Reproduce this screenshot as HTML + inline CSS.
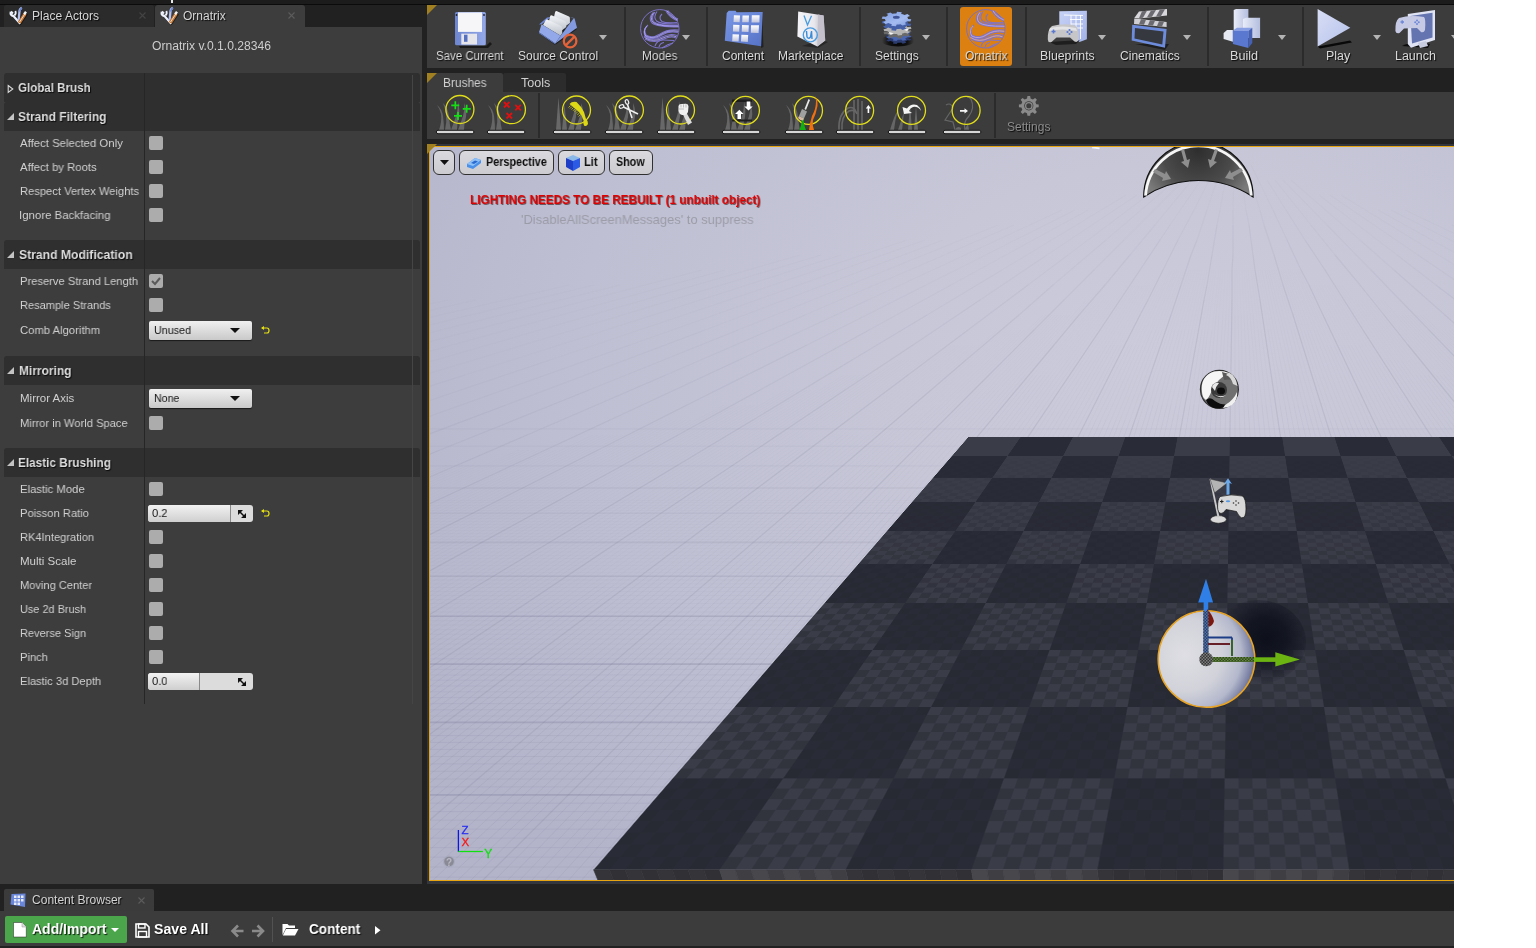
<!DOCTYPE html>
<html><head><meta charset="utf-8">
<style>
*{box-sizing:border-box}
html,body{margin:0;padding:0}
body{width:1536px;height:948px;background:#fff;position:relative;overflow:hidden;font-family:"Liberation Sans",sans-serif}
.a{position:absolute}
svg{position:absolute;overflow:visible}
#app{left:0;top:0;width:1454px;height:948px;background:#212121;overflow:hidden}
.tx{position:absolute;white-space:nowrap;transform-origin:0 0;line-height:1;will-change:transform;font-family:"Liberation Sans",sans-serif}
.hdr{position:absolute;left:4px;width:416px;background:#2f2f2f;border-radius:3px 3px 0 0}
.cb{position:absolute;left:149px;width:14px;height:14px;background:#acacac;border-radius:2px}
.dd{position:absolute;width:0;height:0;border-left:4px solid transparent;border-right:4px solid transparent;border-top:5px solid #b4b4b4}
.sep{position:absolute;width:2px;background:#2b2b2b}
.vbtn{position:absolute;top:150px;height:25px;border:1px solid #303030;border-radius:6px;background:linear-gradient(#dadade,#cbcbd0)}
.combo{position:absolute;left:149px;width:103px;height:19px;border-radius:2px;background:linear-gradient(#f0f0f0,#c9c9c9);box-shadow:0 1px 1px #1a1a1a}
.combo i{position:absolute;right:12px;top:7px;width:0;height:0;border-left:5px solid transparent;border-right:5px solid transparent;border-top:5px solid #111}
.spin{position:absolute;left:148px;width:105px;height:17px;border-radius:3px;background:#dcdcdc;overflow:hidden}
.spin b{position:absolute;left:0;top:0;height:17px;background:linear-gradient(#f2f2f2,#cfcfcf);border-right:1px solid #8a8a8a}
.reset{position:absolute;left:261px;width:9px;height:8px}
.bi{position:absolute;top:92px;width:50px;height:47px}
</style></head>
<body>
<div id="app" class="a">
  <!-- top strip -->
  <div class="a" style="left:0;top:0;width:1454px;height:4px;background:#1c1c1c"></div>
  <div class="a" style="left:0;top:4px;width:1454px;height:1px;background:#0b0b0b"></div>
  <div class="a" style="left:171px;top:0;width:1.5px;height:2.5px;background:#e8e8e8"></div>

  <!-- LEFT PANEL tabs -->
  <div class="a" style="left:4px;top:5px;width:150px;height:22px;background:#2b2b2b;border-radius:2px 2px 0 0"></div>
  <div class="a" style="left:155px;top:5px;width:150px;height:22px;background:#3d3d3d;border-radius:3px 3px 0 0"></div>
  <svg style="left:139px;top:12px" width="7" height="7"><path d="M0.5 0.5 L6.5 6.5 M6.5 0.5 L0.5 6.5" stroke="#444" stroke-width="1.1"/></svg>
  <svg style="left:288px;top:12px" width="7" height="7"><path d="M0.5 0.5 L6.5 6.5 M6.5 0.5 L0.5 6.5" stroke="#5c5c5c" stroke-width="1.1"/></svg>
  <!-- tab icons -->
  <svg style="left:9px;top:7px" width="18" height="18" viewBox="0 0 18 18">
    <path d="M5 9 L12 17.5 M11 16 L17.5 6.5" stroke="#000" stroke-width="3.5" opacity=".5"/>
    <path d="M1.8 4.8 Q1 8.5 4.5 9 L11.3 16.8" fill="none" stroke="#eef2fc" stroke-width="2.3"/>
    <path d="M2 4.5 L4 6.5 M6.3 4 Q7.5 6.5 5.5 8.5" fill="none" stroke="#eef2fc" stroke-width="1.8"/>
    <path d="M12.8 0.8 Q10.5 2 10.4 5 L9.6 13.5" fill="none" stroke="#b4c2f0" stroke-width="2.3"/>
    <path d="M12.8 0.8 Q11 2 10.8 4.5" fill="none" stroke="#6a84d4" stroke-width="1.6"/>
    <path d="M10.2 15.8 L16.2 6.6" stroke="#c47838" stroke-width="3.3"/>
    <path d="M10.5 15 L15.8 7" stroke="#f0d8c0" stroke-width="1"/>
    <path d="M15.2 7.2 L17 4.8" stroke="#f4f4f4" stroke-width="2.4"/>
  </svg>
  <svg style="left:160px;top:7px" width="18" height="18" viewBox="0 0 18 18">
    <path d="M5 9 L12 17.5 M11 16 L17.5 6.5" stroke="#000" stroke-width="3.5" opacity=".5"/>
    <path d="M1.8 4.8 Q1 8.5 4.5 9 L11.3 16.8" fill="none" stroke="#eef2fc" stroke-width="2.3"/>
    <path d="M2 4.5 L4 6.5 M6.3 4 Q7.5 6.5 5.5 8.5" fill="none" stroke="#eef2fc" stroke-width="1.8"/>
    <path d="M12.8 0.8 Q10.5 2 10.4 5 L9.6 13.5" fill="none" stroke="#b4c2f0" stroke-width="2.3"/>
    <path d="M12.8 0.8 Q11 2 10.8 4.5" fill="none" stroke="#6a84d4" stroke-width="1.6"/>
    <path d="M10.2 15.8 L16.2 6.6" stroke="#c47838" stroke-width="3.3"/>
    <path d="M10.5 15 L15.8 7" stroke="#f0d8c0" stroke-width="1"/>
    <path d="M15.2 7.2 L17 4.8" stroke="#f4f4f4" stroke-width="2.4"/>
  </svg>

  <div id="lp" class="a" style="left:0;top:27px;width:422px;height:857px;background:#3d3d3d"></div>

  <!-- headers -->
  <div class="hdr" style="top:73px;height:29px;border-radius:3px 3px 0 0"></div>
  <div class="hdr" style="top:102px;height:29px"></div>
  <div class="hdr" style="top:240px;height:29px"></div>
  <div class="hdr" style="top:356px;height:29px"></div>
  <div class="hdr" style="top:448px;height:29px"></div>
  <!-- triangles -->
  <svg style="left:7px;top:84px" width="8" height="10"><path d="M1.2 1.5 L5.8 5 L1.2 8.5 Z" fill="none" stroke="#d8d8d8" stroke-width="1.1"/></svg>
  <svg style="left:7px;top:113px" width="8" height="8"><path d="M7 0 L7 7 L0 7 Z" fill="#c4c4c4"/></svg>
  <svg style="left:7px;top:251px" width="8" height="8"><path d="M7 0 L7 7 L0 7 Z" fill="#c4c4c4"/></svg>
  <svg style="left:7px;top:367px" width="8" height="8"><path d="M7 0 L7 7 L0 7 Z" fill="#c4c4c4"/></svg>
  <svg style="left:7px;top:459px" width="8" height="8"><path d="M7 0 L7 7 L0 7 Z" fill="#c4c4c4"/></svg>

  <div class="a" style="left:144px;top:73px;width:1px;height:631px;background:#262626"></div>
  <div class="a" style="left:412px;top:75px;width:1px;height:629px;background:#454545"></div>

  <!-- checkboxes -->
  <div class="cb" style="top:136px"></div>
  <div class="cb" style="top:160px"></div>
  <div class="cb" style="top:184px"></div>
  <div class="cb" style="top:208px"></div>
  <div class="cb" style="top:274px"><svg style="left:2px;top:2px" width="10" height="10"><path d="M1 5 L4 8 L9 2" fill="none" stroke="#5a5a5a" stroke-width="2"/></svg></div>
  <div class="cb" style="top:298px"></div>
  <div class="cb" style="top:416px"></div>
  <div class="cb" style="top:482px"></div>
  <div class="cb" style="top:530px"></div>
  <div class="cb" style="top:554px"></div>
  <div class="cb" style="top:578px"></div>
  <div class="cb" style="top:602px"></div>
  <div class="cb" style="top:626px"></div>
  <div class="cb" style="top:650px"></div>

  <!-- combos -->
  <div class="combo" style="top:321px"><i></i></div>
  <div class="combo" style="top:389px"><i></i></div>
  <svg class="reset" style="top:326px" width="9" height="9"><path d="M1 2 L6 2 Q8 2 8 4.5 Q8 7 6 7 L3 7" fill="none" stroke="#e6e010" stroke-width="1.2"/><path d="M0 2 L3 0 L3 4 Z" fill="#e6e010"/></svg>
  <!-- spins -->
  <div class="spin" style="top:505px"><b style="width:83px"></b><svg style="left:89px;top:4px" width="10" height="10"><path d="M1 1 L6 1 L1 6 Z M9 9 L4 9 L9 4 Z" fill="#111"/><path d="M2 2 L8 8" stroke="#111" stroke-width="1.5"/></svg></div>
  <div class="spin" style="top:673px"><b style="width:52px"></b><svg style="left:89px;top:4px" width="10" height="10"><path d="M1 1 L6 1 L1 6 Z M9 9 L4 9 L9 4 Z" fill="#111"/><path d="M2 2 L8 8" stroke="#111" stroke-width="1.5"/></svg></div>
  <svg class="reset" style="top:509px" width="9" height="9"><path d="M1 2 L6 2 Q8 2 8 4.5 Q8 7 6 7 L3 7" fill="none" stroke="#e6e010" stroke-width="1.2"/><path d="M0 2 L3 0 L3 4 Z" fill="#e6e010"/></svg>

  <!-- TOOLBAR -->
  <div class="a" style="left:427px;top:5px;width:1027px;height:63px;background:#3c3c3c"></div>
  <svg style="left:427px;top:5px" width="12" height="12"><path d="M0 0 L10 0 L0 10 Z" fill="#a08020"/></svg>
  <div class="sep" style="left:624px;top:7px;height:59px"></div>
  <div class="sep" style="left:706px;top:7px;height:59px"></div>
  <div class="sep" style="left:859px;top:7px;height:59px"></div>
  <div class="sep" style="left:946px;top:7px;height:59px"></div>
  <div class="sep" style="left:1025px;top:7px;height:59px"></div>
  <div class="sep" style="left:1207px;top:7px;height:59px"></div>
  <div class="sep" style="left:1302px;top:7px;height:59px"></div>
  <div class="a" style="left:960px;top:7px;width:52px;height:59px;background:#db8011;border-radius:3px"></div>
  <div class="dd" style="left:599px;top:35px"></div>
  <div class="dd" style="left:682px;top:35px"></div>
  <div class="dd" style="left:922px;top:35px"></div>
  <div class="dd" style="left:1098px;top:35px"></div>
  <div class="dd" style="left:1183px;top:35px"></div>
  <div class="dd" style="left:1278px;top:35px"></div>
  <div class="dd" style="left:1373px;top:35px"></div>
  <div class="dd" style="left:1451px;top:35px"></div>
    <!-- floppy -->
  <svg style="left:450px;top:8px" width="45" height="42" viewBox="0 0 45 42">
    <defs><linearGradient id="flb" x1="0" y1="0" x2="1" y2="0"><stop offset="0" stop-color="#6d86d0"/><stop offset=".5" stop-color="#7f96dc"/><stop offset="1" stop-color="#94a8e8"/></linearGradient></defs>
    <path d="M9 38 L36 38 L40 34 L42 36 L38 40 L10 40 Z" fill="#0c0c0c" opacity=".7"/>
    <rect x="5" y="4" width="30.8" height="33.3" rx="1.5" fill="url(#flb)"/>
    <rect x="8" y="4.4" width="24" height="19.5" fill="#f6f6f8"/>
    <rect x="11.3" y="25.7" width="15.7" height="10.8" fill="#e6e6ea"/>
    <rect x="14" y="26.7" width="3.5" height="7.1" fill="#5670c0"/>
    <circle cx="6.5" cy="7" r="0.9" fill="#222"/><circle cx="34" cy="7" r="0.9" fill="#222"/>
  </svg>
  <!-- source control -->
  <svg style="left:530px;top:6px" width="60" height="44" viewBox="0 0 60 44">
    <defs><linearGradient id="ppg" x1="0" y1="0" x2="0" y2="1"><stop offset="0" stop-color="#f4f6f8"/><stop offset="1" stop-color="#b8bec8"/></linearGradient></defs>
    <path d="M9 27 L25 39 L47 23 L40 22 Z" fill="#000" opacity=".5"/>
    <path d="M9 18.6 L17 11.5 L21 11 L11.6 18.3 Z" fill="#7088d6"/>
    <path d="M30.6 29.7 L43.6 12.5 L44.5 12.3 L47 21.8 L25.3 37.6 Z" fill="#839ae0"/>
    <path d="M40 11 L44 12 L43.6 12.5 Z" fill="#7088d6"/>
    <path d="M25 6.5 Q25.5 4.8 27 5.2 L39 10.5 Q40 11 39.9 12.5 L39.9 17 L30 24 L24 11 Z" fill="url(#ppg)"/>
    <path d="M20 10.7 Q20.5 9 22 9.4 L35 15 Q36.2 15.6 36.2 17 L36.2 21 L30 26 L19 15 Z" fill="url(#ppg)"/>
    <path d="M15.3 15 Q15.8 13.2 17.3 13.6 L31 20 Q32 20.6 32 22 L32.3 27 L30.6 29.7 L13 19 Z" fill="url(#ppg)"/>
    <path d="M9 26.2 L11.6 18.3 L30.6 29.7 L25.3 37.6 Z" fill="#92a8e8"/>
    <path d="M9 26.2 L25.3 37.6 L25.5 38.6 L9 27.2 Z" fill="#6a82cc"/>
    <circle cx="40.1" cy="35" r="6.3" fill="none" stroke="#e2623a" stroke-width="2.3"/>
    <path d="M35.7 39.4 L44.5 30.6" stroke="#e2623a" stroke-width="2.3"/>
  </svg>
  <!-- modes -->
  <svg style="left:0;top:0" width="1" height="1"><defs>
    <symbol id="orx" viewBox="0 0 48 46" width="48" height="46" overflow="visible">
      <circle cx="23.8" cy="22.8" r="19.2" fill="none" stroke="#7a70c4" stroke-width="1"/>
      <g fill="none" stroke="#7e74cc" stroke-width="1.1">
        <path d="M17 6.5 Q12 12 16 17 Q21 21 42.5 21"/>
        <path d="M19 6 Q14.5 12 18 16 Q23 20 42.5 19.5"/>
        <path d="M21 5.5 Q17 11 20.5 15 Q25 18.5 42 18"/>
        <path d="M26 8 Q22 12 26 15.5 Q30 17.5 41 16.5"/>
        <path d="M30 5 Q33 11 41.5 15"/>
        <path d="M32 4.5 Q35 10 42 13"/>
        <path d="M12 19 Q7 23 10 29 Q16 33 24 28 Q31 23 42.5 24"/>
        <path d="M10 21 Q6 26 10 31 Q18 35 26 29 Q33 24.5 42 26.5"/>
        <path d="M8 30 Q16 36 26 31 Q34 27 41 29.5"/>
        <path d="M9 33 Q18 38 28 33 Q35 29.5 40 32"/>
        <path d="M19 40 Q21 34 27 34 Q33 34 38 34.5"/>
        <path d="M23 41 Q24 37 28 36.5"/>
        <path d="M26 42 Q32 38 37 37"/>
      </g>
      <g fill="none" stroke="#aea6f6" stroke-width=".9">
        <path d="M18 6.3 Q13.3 12 17 16.5 Q22 20.5 42.5 20.3"/>
        <path d="M11 20 Q6.5 24.5 9.7 30 Q17 34 25 28.5 Q32 23.7 42.3 25.3"/>
        <path d="M8.5 31.5 Q17 37 27 32 Q34.5 28.3 40.5 30.8"/>
        <path d="M31 4.7 Q34 10.5 41.8 14"/>
      </g>
    </symbol></defs></svg>
  <svg style="left:636px;top:6px" width="48" height="46" viewBox="0 0 48 46"><use href="#orx"/></svg>
  <!-- content -->
  <svg style="left:715px;top:6px" width="50" height="44" viewBox="0 0 50 44">
    <defs><linearGradient id="cfg" x1="0" y1="0" x2="1" y2="1"><stop offset="0" stop-color="#7a98e6"/><stop offset="1" stop-color="#5572c6"/></linearGradient>
    <linearGradient id="sqg" x1="0" y1="0" x2="0" y2="1"><stop offset="0" stop-color="#ffffff"/><stop offset="1" stop-color="#c0c4dc"/></linearGradient></defs>
    <path d="M47 8 L48.5 41 L46 42 Z" fill="#111" opacity=".6"/>
    <path d="M11.7 7 L13.7 4.7 L20.7 4.7 L21.5 6.2 L47.7 5.9 L46.1 40.2 L9.8 34.8 Z" fill="url(#cfg)"/>
    <g fill="url(#sqg)">
      <path d="M18.9 9.3 L25 9.5 L24.6 16.2 L18.5 16 Z"/><path d="M27.5 9.5 L34 9.6 L33.7 16.3 L27.2 16.2 Z"/><path d="M36.8 9.3 L44.6 9.2 L44.4 16.6 L36.5 16.5 Z"/>
      <path d="M18.2 18.8 L24.5 19 L24.2 25.8 L17.9 25.5 Z"/><path d="M27 19 L33.8 19.2 L33.5 26 L26.7 25.8 Z"/><path d="M36 19.3 L44 19.3 L43.6 27 L35.8 26.8 Z"/>
      <path d="M17.6 28.3 L24 28.6 L23.6 35.5 L17.2 35.2 Z"/><path d="M26.4 28.7 L33.2 29 L32.8 36 L26 35.6 Z"/>
    </g>
  </svg>
  <!-- marketplace -->
  <svg style="left:790px;top:6px" width="42" height="44" viewBox="0 0 42 44">
    <defs><linearGradient id="bgg" x1="0" y1="0" x2="1" y2="0"><stop offset="0" stop-color="#f4f4f8"/><stop offset=".6" stop-color="#e8e8ee"/><stop offset="1" stop-color="#b4b0bc"/></linearGradient></defs>
    <path d="M12 40 L28 42 L38 36 L30 34 Z" fill="#000" opacity=".35"/>
    <path d="M8.2 5.5 L33.6 9.4 L35.2 34.4 L27.3 40.6 L7.4 30.5 Z" fill="url(#bgg)"/>
    <path d="M28 8.5 L33.6 9.4 L35.2 34.4 L27.3 40.6 Z" fill="#c4c0cc"/>
    <path d="M14 9.5 L17.5 19 L21.5 9.8" fill="none" stroke="#4a9ce0" stroke-width="1.3"/>
    <circle cx="20.3" cy="28.9" r="7" fill="none" stroke="#4a9ce0" stroke-width="1.4"/>
    <path d="M16.5 25 L17 31 Q18.5 33.5 20.5 31 L21.5 25 M21.5 25 L22 33" fill="none" stroke="#3a8cd8" stroke-width="1.4"/>
  </svg>
  <!-- settings gears -->
  <svg style="left:876px;top:8px" width="44" height="42" viewBox="0 0 44 42">
    <defs><radialGradient id="gsh" cx="22" cy="33" r="16" gradientUnits="userSpaceOnUse"><stop offset="0" stop-color="#000" stop-opacity=".95"/><stop offset=".6" stop-color="#000" stop-opacity=".7"/><stop offset="1" stop-color="#000" stop-opacity="0"/></radialGradient>
    <linearGradient id="gtg" x1="0" y1="0" x2="1" y2="1"><stop offset="0" stop-color="#7e9ce0"/><stop offset=".6" stop-color="#a4bcf0"/><stop offset="1" stop-color="#7c98d8"/></linearGradient></defs>
    <ellipse cx="22" cy="32.5" rx="17" ry="6" fill="url(#gsh)"/>
    <path d="M32.6 29.6 L32.6 30.4 L35.4 30.9 L34.2 32.6 L31.3 32.3 L30.3 33.0 L29.1 33.6 L30.3 34.8 L26.7 35.7 L25.2 34.5 L23.4 34.7 L21.7 34.7 L20.6 35.9 L16.8 35.4 L17.5 34.1 L16.0 33.6 L14.8 33.0 L12.1 33.6 L10.2 31.9 L12.7 31.2 L12.4 30.4 L12.4 29.6 L9.6 29.1 L10.8 27.4 L13.7 27.7 L14.7 27.0 L15.9 26.4 L14.7 25.2 L18.3 24.3 L19.8 25.5 L21.6 25.3 L23.3 25.3 L24.4 24.1 L28.2 24.6 L27.5 25.9 L29.0 26.4 L30.2 27.0 L32.9 26.4 L34.8 28.1 L32.3 28.8 Z" fill="#2c3c70"/>
    <path d="M32.6 26.6 L32.6 27.4 L35.4 27.9 L34.2 29.6 L31.3 29.3 L30.3 30.0 L29.1 30.6 L30.3 31.8 L26.7 32.7 L25.2 31.5 L23.4 31.7 L21.7 31.7 L20.6 32.9 L16.8 32.4 L17.5 31.1 L16.0 30.6 L14.8 30.0 L12.1 30.6 L10.2 28.9 L12.7 28.2 L12.4 27.4 L12.4 26.6 L9.6 26.1 L10.8 24.4 L13.7 24.7 L14.7 24.0 L15.9 23.4 L14.7 22.2 L18.3 21.3 L19.8 22.5 L21.6 22.3 L23.3 22.3 L24.4 21.1 L28.2 21.6 L27.5 22.9 L29.0 23.4 L30.2 24.0 L32.9 23.4 L34.8 25.1 L32.3 25.8 Z" fill="#4a66b0"/>
    <path d="M32.2 25.0 L31.6 25.9 L34.1 26.8 L31.7 28.5 L29.0 27.7 L27.5 28.2 L25.8 28.7 L26.2 30.1 L21.9 30.5 L21.1 29.1 L19.3 29.0 L17.4 28.7 L15.5 29.9 L11.9 28.7 L13.5 27.5 L12.4 26.8 L11.5 26.0 L8.3 26.2 L7.5 24.2 L10.6 23.8 L10.8 23.0 L11.4 22.1 L8.9 21.2 L11.3 19.5 L14.0 20.3 L15.5 19.8 L17.2 19.3 L16.8 17.9 L21.1 17.5 L21.9 18.9 L23.7 19.0 L25.6 19.3 L27.5 18.1 L31.1 19.3 L29.5 20.5 L30.6 21.2 L31.5 22.0 L34.7 21.8 L35.5 23.8 L32.4 24.2 Z" fill="#6a6a6a"/>
    <path d="M32.2 22.0 L31.6 22.9 L34.1 23.8 L31.7 25.5 L29.0 24.7 L27.5 25.2 L25.8 25.7 L26.2 27.1 L21.9 27.5 L21.1 26.1 L19.3 26.0 L17.4 25.7 L15.5 26.9 L11.9 25.7 L13.5 24.5 L12.4 23.8 L11.5 23.0 L8.3 23.2 L7.5 21.2 L10.6 20.8 L10.8 20.0 L11.4 19.1 L8.9 18.2 L11.3 16.5 L14.0 17.3 L15.5 16.8 L17.2 16.3 L16.8 14.9 L21.1 14.5 L21.9 15.9 L23.7 16.0 L25.6 16.3 L27.5 15.1 L31.1 16.3 L29.5 17.5 L30.6 18.2 L31.5 19.0 L34.7 18.8 L35.5 20.8 L32.4 21.2 Z" fill="#b4b4b4"/>
    <path d="M13 24 L18 25.5 L14 26.5 Z M27 21.5 L33 20.5 L31 23 Z" fill="#f4f4f4"/>
    <path d="M31.8 14.4 L32.0 15.4 L35.3 15.8 L34.4 18.0 L31.0 17.8 L30.1 18.6 L28.8 19.4 L30.5 20.8 L26.6 22.0 L24.6 20.7 L22.7 21.0 L20.7 21.1 L19.9 22.7 L15.3 22.2 L15.8 20.6 L14.1 20.2 L12.5 19.5 L9.6 20.4 L7.0 18.5 L9.7 17.5 L9.2 16.6 L9.0 15.6 L5.7 15.2 L6.6 13.0 L10.0 13.2 L10.9 12.4 L12.2 11.6 L10.5 10.2 L14.4 9.0 L16.4 10.3 L18.3 10.0 L20.3 9.9 L21.1 8.3 L25.7 8.8 L25.2 10.4 L26.9 10.8 L28.5 11.5 L31.4 10.6 L34.0 12.5 L31.3 13.5 Z" fill="#4660a8"/>
    <path d="M31.8 9.9 L32.0 10.9 L35.3 11.3 L34.4 13.5 L31.0 13.3 L30.1 14.1 L28.8 14.9 L30.5 16.3 L26.6 17.5 L24.6 16.2 L22.7 16.5 L20.7 16.6 L19.9 18.2 L15.3 17.7 L15.8 16.1 L14.1 15.7 L12.5 15.0 L9.6 15.9 L7.0 14.0 L9.7 13.0 L9.2 12.1 L9.0 11.1 L5.7 10.7 L6.6 8.5 L10.0 8.7 L10.9 7.9 L12.2 7.1 L10.5 5.7 L14.4 4.5 L16.4 5.8 L18.3 5.5 L20.3 5.4 L21.1 3.8 L25.7 4.3 L25.2 5.9 L26.9 6.3 L28.5 7.0 L31.4 6.1 L34.0 8.0 L31.3 9.0 Z" fill="url(#gtg)"/>
    <ellipse cx="20.3" cy="9.3" rx="3.4" ry="1.5" fill="#3e5494"/>
  </svg>
  <!-- ornatrix logo -->
  <svg style="left:962px;top:6px" width="48" height="46" viewBox="0 0 48 46"><use href="#orx"/></svg>
  <!-- blueprints -->
  <svg style="left:1040px;top:6px" width="52" height="44" viewBox="0 0 52 44">
    <defs><linearGradient id="bpd" x1="0" y1="0" x2="1" y2="1"><stop offset="0" stop-color="#c8d2f6"/><stop offset="1" stop-color="#a2b2e8"/></linearGradient></defs>
    <path d="M19.3 5.2 L46.9 4.7 L46.9 33.3 L39.6 36 L19.3 20.8 Z" fill="url(#bpd)"/>
    <g stroke="#ffffff" stroke-width="0.9" fill="none">
      <path d="M24 9 L43 9.5 M30 13.5 L43 13.5 M31 18 L43 18 M34 22 L43 22 M31 9 L31 30 M36 9 L36 32 M40.5 9 L40.5 33"/>
    </g>
    <path d="M9 36 L16 39 L36 38 L40 34 Z" fill="#000" opacity=".5"/>
    <path d="M12 20 Q24 17 35 19.5 Q39 21 38.8 33 Q38 37 34.5 35.5 L30 31.5 L16.5 31.5 L11.5 36 Q8 37 7.8 33.5 Q7.5 23 12 20 Z" fill="#c6c6c8"/>
    <path d="M10 22 Q22 19 36 22 L37 25 Q22 22 9 25 Z" fill="#e4e4e6"/>
    <path d="M11.5 25.5 L15.5 25.5 M13.5 23.5 L13.5 27.5" stroke="#5a78d0" stroke-width="1.5"/>
    <g fill="#5a78d0"><circle cx="29.5" cy="24" r="1.1"/><circle cx="29.5" cy="28" r="1.1"/><circle cx="27.5" cy="26" r="1.1"/><circle cx="31.5" cy="26" r="1.1"/></g>
  </svg>
  <!-- cinematics -->
  <svg style="left:1125px;top:6px" width="50" height="46" viewBox="0 0 50 46">
    <path d="M10 38 L40 44 L44 38 Z" fill="#000" opacity=".5"/>
    <path d="M7.2 18.75 L41.6 22.9 L40 41.7 L6.7 34.4 Z" fill="#6e8cdc"/>
    <path d="M10 22 L38.5 25.5 L37.3 38.5 L9.5 32.5 Z" fill="#35383f"/>
    <path d="M9.3 12 L14 5.5 L42 3 L42 9.5 L14 12.5 Z" fill="#d8d8dc"/>
    <g fill="#6a6a70"><path d="M17 5.3 L22 4.8 L18 11.8 L14 12.3 Z"/><path d="M26 4.4 L31 4 L27 10.8 L22 11.3 Z"/><path d="M35 3.6 L40 3.2 L36 10 L31 10.4 Z"/></g>
    <path d="M9.3 12.5 L14 13 L41.6 16 L41.6 21 L9 18 Z" fill="#d0d0d4"/>
    <g fill="#6a6a70"><path d="M16 13.3 L21 13.8 L19 18.8 L14 18.3 Z"/><path d="M25 14.3 L30 14.8 L28 19.6 L23 19.1 Z"/><path d="M34 15.2 L39 15.7 L37 20.4 L32 19.9 Z"/></g>
  </svg>
  <!-- build -->
  <svg style="left:1215px;top:6px" width="50" height="46" viewBox="0 0 50 46">
    <defs><linearGradient id="bdg" x1="0" y1="0" x2="1" y2="0"><stop offset="0" stop-color="#e8ecf8"/><stop offset="1" stop-color="#b4bede"/></linearGradient></defs>
    <path d="M18.7 4 L21 3.1 L33.4 3.1 L33.4 30 L18.7 30 Z" fill="url(#bdg)"/>
    <path d="M28 13 L31 11.7 L45.1 11.7 L45.1 32 L28 32 Z" fill="url(#bdg)"/>
    <path d="M8.6 27 L12 24 L17.9 24 L17.9 35.8 L8.6 33 Z" fill="#e6e8f2"/>
    <path d="M17.9 24.5 L22 21.8 L37.3 21.8 L33.3 25 Z" fill="#8aa0e4"/>
    <path d="M17.9 24.5 L33.3 25 L33.3 42 L17.9 38 Z" fill="#5b78d0"/>
    <path d="M33.3 25 L37.3 21.8 L37.3 37 L33.3 42 Z" fill="#4660b4"/>
  </svg>
  <!-- play -->
  <svg style="left:1310px;top:6px" width="50" height="46" viewBox="0 0 50 46">
    <defs><linearGradient id="plg" x1="0" y1="0" x2="1" y2="1"><stop offset="0" stop-color="#d8def6"/><stop offset="1" stop-color="#b6c2ea"/></linearGradient></defs>
    <path d="M7.6 40.4 L40 34.5 L42 36.5 L10 42.5 Z" fill="#000" opacity=".85"/>
    <path d="M7.6 3.1 L40.3 21.8 L7.6 40.4 Z" fill="url(#plg)"/>
  </svg>
  <!-- launch -->
  <svg style="left:1390px;top:6px" width="50" height="46" viewBox="0 0 50 46">
    <path d="M12 40 Q22 34 40 38 L38 42 Z" fill="#000" opacity=".8"/>
    <path d="M17.8 8 L45 3.9 L45 34 L21 41.8 L17.8 38 Z" fill="#dfe3f3"/>
    <path d="M20.5 10 L42.5 6.7 L42.5 31.5 L22 37.5 Z" fill="#6474b0"/>
    <path d="M28 37 L36 35 L38 40 L30 42 Z" fill="#c8cce0"/>
    <path d="M9 12 Q20 8.5 34 11 Q36 13 35 24 Q34 27 31 26 L27 22 L14 22.5 L9.5 27 Q6 28 5.4 25 Q5 15 9 12 Z" fill="#c6cae4"/>
    <path d="M10.5 16 L14 16 M12.2 14.3 L12.2 17.7" stroke="#6e88d8" stroke-width="1.3"/>
    <g fill="#6e88d8"><circle cx="27" cy="14.5" r="1"/><circle cx="27" cy="18" r="1"/><circle cx="25.2" cy="16.2" r="1"/><circle cx="28.8" cy="16.2" r="1"/></g>
  </svg>


  <!-- brushes tabs -->
  <div class="a" style="left:427px;top:73px;width:76px;height:19px;background:#3c3c3c;border-radius:2px 2px 0 0"></div>
  <div class="a" style="left:503px;top:73px;width:63px;height:19px;background:#2c2c2c;border-radius:2px 2px 0 0"></div>
  <svg style="left:427px;top:73px" width="12" height="12"><path d="M0 0 L10 0 L0 10 Z" fill="#a08020"/></svg>
  <div class="a" style="left:427px;top:92px;width:1027px;height:47px;background:#3c3c3c"></div>
  <div class="sep" style="left:538px;top:93px;height:45px"></div>
  <div class="sep" style="left:994px;top:93px;height:45px"></div>
    <svg style="left:0;top:0" width="1" height="1">
    <defs>
      <symbol id="bbar" viewBox="0 0 40 47" width="40" height="47" overflow="visible">
        <rect x="0.3" y="38.3" width="37.6" height="3.4" rx="1.7" fill="#d6d6d6" stroke="#0c0c0c" stroke-width="0.9"/>
      </symbol>
      <symbol id="hair4" viewBox="0 0 40 47" width="40" height="47" overflow="visible">
        <g fill="#666">
          <path d="M3 38 Q6 30 5 22 Q4 17 1 13 Q6 17 7 24 Q8 32 8 38 Z"/>
          <path d="M9 38 Q11 30 10 22 Q9 16 7 11 Q12 16 13 24 Q13.5 32 15 38 Z"/>
          <path d="M15 38 Q18 30 20 24 Q22 18 22 9 Q24 18 23 25 Q21 32 21 38 Z"/>
          <path d="M22 38 Q25 30 27 24 Q29 18 28 11 Q31 18 30 25 Q28 32 28 38 Z"/>
        </g>
      </symbol>
      <symbol id="hair2" viewBox="0 0 40 47" width="40" height="47" overflow="visible">
        <g fill="#666">
          <path d="M3 38 Q6 30 5 22 Q4 17 1 13 Q6 17 7 24 Q8 32 8 38 Z"/>
          <path d="M9 38 Q11 30 10 22 Q9 16 7 11 Q12 16 13 24 Q13.5 32 15 38 Z"/>
        </g>
      </symbol>
      <symbol id="hairsp" viewBox="0 0 40 47" width="40" height="47" overflow="visible">
        <g fill="#686868">
          <path d="M3 38 L5.5 5 L8 38 Z"/>
          <path d="M9 38 L11.5 12 L14 38 Z"/>
          <path d="M15 38 Q18 30 20 24 Q22 18 22 9 Q24 18 23 25 Q21 32 21 38 Z"/>
          <path d="M22 38 Q25 30 27 24 Q29 18 28 11 Q31 18 30 25 Q28 32 28 38 Z"/>
        </g>
      </symbol>
    </defs>
  </svg>
  <!-- 1 add -->
  <svg style="left:435.5px;top:92px" width="40" height="47" viewBox="0 0 40 47">
    <use href="#hair4"/><use href="#bbar"/>
    <circle cx="23.9" cy="17.5" r="14" fill="none" stroke="#e2de1a" stroke-width="1.3"/>
    <g stroke="#14e014" stroke-width="1.7"><path d="M15.3 13.3 H23.3 M19.3 9.3 V17.3"/><path d="M26.7 16.8 H34.7 M30.7 12.8 V20.8"/><path d="M18 23.9 H26 M22 19.9 V27.9"/></g>
  </svg>
  <!-- 2 delete -->
  <svg style="left:487.3px;top:92px" width="40" height="47" viewBox="0 0 40 47">
    <use href="#hair2"/><use href="#bbar"/>
    <circle cx="24.4" cy="17.7" r="14" fill="none" stroke="#e2de1a" stroke-width="1.3"/>
    <g stroke="#e01010" stroke-width="1.8"><path d="M17 10 L22.5 15.5 M22.5 10 L17 15.5"/><path d="M28.3 12.8 L33.8 18.3 M33.8 12.8 L28.3 18.3"/><path d="M19.5 21 L25 26.5 M25 21 L19.5 26.5"/></g>
  </svg>
  <!-- 3 comb -->
  <svg style="left:553.3px;top:92px" width="40" height="47" viewBox="0 0 40 47">
    <use href="#hairsp"/><use href="#bbar"/>
    <circle cx="23.5" cy="18" r="14" fill="none" stroke="#e2de1a" stroke-width="1.3"/>
    <path d="M16.5 12 Q19 9 23.5 10 Q28 14 31 20 L33 27 Q35.5 29 35 32 Q33.5 35 31 33.5 Q29.5 31.5 30.8 29 L28.5 23.5 Q26 19.5 22.5 17 Z" fill="#dcd816"/>
    <path d="M17.5 13.5 L15.5 15.5 M19 14.5 L17 16.5 M20.5 15.5 L18.5 17.5 M22 16.8 L20 18.8 M23.5 18 L21.5 20 M25 19.5 L23 21.5 M26.3 21 L24.3 23 M27.5 22.5 L25.5 24.5" stroke="#c8c412" stroke-width=".8"/>
  </svg>
  <!-- 4 scissors -->
  <svg style="left:605.2px;top:92px" width="40" height="47" viewBox="0 0 40 47">
    <use href="#hair4"/><use href="#bbar"/>
    <circle cx="24.4" cy="18" r="14" fill="none" stroke="#e2de1a" stroke-width="1.3"/>
    <g fill="none" stroke="#f0f0f0" stroke-width="1.2">
      <ellipse cx="22" cy="10" rx="1.6" ry="2.4" transform="rotate(-20 22 10)"/>
      <ellipse cx="16.5" cy="14.5" rx="2.4" ry="1.6" transform="rotate(-20 16.5 14.5)"/>
    </g>
    <path d="M22.5 12.5 L27 26 M18.5 15 L33 22" stroke="#f0f0f0" stroke-width="1.6"/>
  </svg>
  <!-- 5 fist -->
  <svg style="left:657.2px;top:92px" width="40" height="47" viewBox="0 0 40 47">
    <use href="#hairsp"/><use href="#bbar"/>
    <circle cx="23.5" cy="18" r="14" fill="none" stroke="#e2de1a" stroke-width="1.3"/>
    <path d="M25.5 21.5 L29.8 21.5 L35 30.5 L31 33 Z" fill="#dcdcdc"/>
    <path d="M21.5 14 Q22 12 24 12 L29 11.8 Q31.5 12 31.5 14.5 L31 20 Q30 22.5 28 23 L25 23 Q22 22 21.5 19 Z" fill="#f0f0f0"/>
    <path d="M24 12.5 L24 15.5 M26.5 12.3 L26.5 15.5 M29 12.3 L29 15.5 M22 17 L27 17" stroke="#9a9a9a" stroke-width=".6"/>
  </svg>
  <!-- 6 up/down -->
  <svg style="left:721.5px;top:92px" width="40" height="47" viewBox="0 0 40 47">
    <use href="#hair4"/><use href="#bbar"/>
    <path d="M10 7.5 L30 7.5 L30 10 L10 10 Z M10 27.5 L30 27.5 L30 29.5 L10 29.5 Z" fill="#1e1e1e"/>
    <circle cx="23.4" cy="18.4" r="14" fill="none" stroke="#e2de1a" stroke-width="1.3"/>
    <path d="M17.3 17.8 L21.5 22 L19 22 L19 27 L15.5 27 L15.5 22 L13 22 Z" fill="#fff"/>
    <path d="M26.5 18.5 L22.3 14.5 L24.7 14.5 L24.7 9.5 L28.3 9.5 L28.3 14.5 L30.7 14.5 Z" fill="#fff"/>
  </svg>
  <!-- 7 paint -->
  <svg style="left:784.5px;top:92px" width="40" height="47" viewBox="0 0 40 47">
    <use href="#hair2"/><use href="#bbar"/>
    <circle cx="23.5" cy="18.4" r="14" fill="none" stroke="#e2de1a" stroke-width="1.3"/>
    <path d="M14.5 38 Q16 34 16.5 31 L17 25 L18.5 25 Q18.5 33 21 38 Z" fill="#10b010"/>
    <path d="M24 38 Q25 30 27 24 Q31 17 31 9 Q31 6 30 4 Q33 8 32.5 14 Q31 22 28 28 Q27 33 29 38 Z" fill="#f07010"/>
    <path d="M23.5 7 L25 8 L21 18 L19.5 17 Z" fill="#e8e8e8"/>
    <path d="M17 17 L22 19.5 L19 26.5 L14 24 Z" fill="#a0a0a0"/>
    <path d="M14 24 L19 26.5 L18 28.5 Q15 28.5 13 26 Z" fill="#d8b8a8"/>
  </svg>
  <!-- 8 straighten -->
  <svg style="left:836.2px;top:92px" width="40" height="47" viewBox="0 0 40 47">
    <g fill="none" stroke="#666" stroke-width="1.6">
      <path d="M3 38 Q2 22 12 16 Q18 14 20 20"/><path d="M6 38 Q5 24 13 19 Q19 17 21 22"/>
      <path d="M18 38 L18 8 M22 38 L22 7 M26 38 L26 9"/>
    </g>
    <use href="#bbar"/>
    <circle cx="23.6" cy="18.4" r="14" fill="none" stroke="#e2de1a" stroke-width="1.3"/>
    <path d="M32.4 13 L35 16.5 L33.2 16.5 L33.2 21 L31.6 21 L31.6 16.5 L29.8 16.5 Z" fill="#fff"/>
  </svg>
  <!-- 9 curl -->
  <svg style="left:888.4px;top:92px" width="40" height="47" viewBox="0 0 40 47">
    <g fill="#666"><path d="M2 38 Q6 24 10 18 Q7 28 6 38 Z"/><path d="M10 38 Q14 26 16 20 Q15 30 14 38 Z"/><path d="M20 38 L22 12 L24 38 Z"/><path d="M26 38 L28 14 L30 38 Z"/></g>
    <use href="#bbar"/>
    <circle cx="23.5" cy="18.4" r="14" fill="none" stroke="#e2de1a" stroke-width="1.3"/>
    <path d="M16 22 L14.5 15 L19 16.5 Q23 11 29 13 Q32 15 33 19 Q30 14 25 15 Q22 16 21 19 L24 21 Z" fill="#f4f4f4"/>
  </svg>
  <!-- 10 push -->
  <svg style="left:942.5px;top:92px" width="40" height="47" viewBox="0 0 40 47">
    <g fill="none" stroke="#666" stroke-width="1.2">
      <path d="M3 13 Q8 10 10 16 L2 28 L10 30 L12 38"/><path d="M22 38 Q20 30 26 24 Q32 16 28 7 Q26 5 24 5"/>
    </g>
    <g fill="#666"><path d="M12 38 Q14 33 18 36 L18 38 Z"/><path d="M21 38 L25 32 L26 38 Z"/></g>
    <use href="#bbar"/>
    <circle cx="23.1" cy="18.4" r="14" fill="none" stroke="#e2de1a" stroke-width="1.3"/>
    <path d="M17 18 L21.5 18 L21.5 16.3 L25 18.9 L21.5 21.5 L21.5 19.8 L17 19.8 Z" fill="#f4f4f4"/>
  </svg>
  <!-- settings gear -->
  <svg style="left:1018px;top:95px" width="22" height="22" viewBox="0 0 22 22">
    <g fill="#8a8a8a">
      <path d="M9.5 1 H12.5 L13 4 L15.5 5 L18 3.2 L20 5.3 L18.3 7.8 L19.3 10.2 L22 10.5 V13.5 L19.2 14 L18.2 16.4 L20 18.8 L17.8 21 L15.4 19.2 L13 20.2 L12.5 23 H9.5 L9 20.2 L6.6 19.2 L4.2 21 L2 18.8 L3.8 16.4 L2.8 14 L0 13.5 V10.5 L2.7 10.2 L3.7 7.8 L2 5.3 L4 3.2 L6.5 5 L9 4 Z" transform="scale(0.9) translate(1 0)"/>
    </g>
    <circle cx="10.8" cy="10.8" r="4.6" fill="#3c3c3c"/>
    <circle cx="10.8" cy="10.8" r="3.2" fill="none" stroke="#8a8a8a" stroke-width="1.3"/>
  </svg>


  <!-- VIEWPORT -->
  <div class="a" style="left:427px;top:144px;width:1027px;height:740px;background:#33363c"></div>
  <div class="a" style="left:429px;top:146px;width:1025px;height:735px;background:#e6a512"></div>
  <div class="a" style="left:430px;top:147px;width:1024px;height:733px;overflow:hidden;background:radial-gradient(ellipse 900px 640px at 730px 210px,#cbcbdb 0%,#c7c7d8 30%,#bebfd2 65%,#b3b4ca 100%)">
    <div class="a" style="left:-430px;top:-147px;width:1536px;height:948px">
      <svg style="left:0;top:0" width="1536" height="948"><g fill="none"><path d="M448 300L379 315M476 300L410 315M569 285L376 330M594 285L409 330M620 285L382 345M702 270L417 345M725 270L398 360M800 255L384 375M821 255L424 375M841 255L465 375M907 240L550 360M925 240L630 345M943 240L705 330M998 225L738 330M1014 225L805 315M1062 210L868 300M1075 210L926 285M1088 210L951 285M1126 195L1002 270M1137 195L1047 255M1148 195L1068 255M1176 180L1106 240M1184 180L1124 240M1192 180L1155 225M1201 180L1170 225M1217 165L1194 210M1222 165L1207 210M1228 165L1220 210M1234 165L1233 210M1240 165L1246 210M1246 165L1260 210M1251 165L1273 210M1267 180L1286 210M1275 180L1311 225M1283 180L1327 225M1291 180L1360 240M1319 195L1397 255M1330 195L1418 255M1341 195L1463 270M1378 210L1486 270M1391 210L1480 255M1405 210L1468 240M1452 225L1486 240" stroke="#50506e" stroke-opacity="0.018" stroke-width="1.2"/><path d="M465 375L418 390M550 360L416 405M630 345L419 420M705 330L506 405M738 330L589 390M805 315L666 375M868 300L739 360M926 285L807 345M951 285L869 330M1002 270L927 315M1047 255L980 300M1068 255L1028 285M1106 240L1053 285M1124 240L1094 270M1155 225L1130 255M1170 225L1160 240M1194 210L1178 240M1207 210L1197 240M1220 210L1217 225M1233 210L1233 225M1246 210L1249 225M1260 210L1264 225M1273 210L1287 240M1286 210L1305 240M1311 225L1335 255M1327 225L1371 270M1360 240L1394 270M1397 255L1436 285M1418 255L1462 285" stroke="#50506e" stroke-opacity="0.037" stroke-width="1.2"/><path d="M506 405L387 450M589 390L440 450M666 375L527 435M739 360L610 420M807 345L687 405M869 330L760 390M927 315L852 360M980 300L913 345M1028 285L968 330M1053 285L1019 315M1094 270L1064 300M1130 255L1105 285M1160 240L1140 270M1178 240L1163 270M1197 240L1191 255M1217 225L1212 255M1233 225L1233 255M1249 225L1253 255M1264 225L1274 255M1287 240L1301 270M1305 240L1325 270M1335 255L1360 285M1371 270L1400 300M1394 270L1445 315M1436 285L1475 315" stroke="#50506e" stroke-opacity="0.055" stroke-width="1.2"/><path d="M440 450L403 465M527 435L423 480M610 420L481 480M687 405L598 450M760 390L678 435M852 360L753 420M913 345L845 390M968 330L908 375M1019 315L966 360M1064 300L1034 330M1105 285L1079 315M1140 270L1120 300M1163 270L1148 300M1191 255L1181 285M1212 255L1207 285M1233 255L1232 270M1253 255L1255 270M1274 255L1283 285M1301 270L1309 285M1325 270L1344 300M1360 285L1384 315M1400 300L1429 330M1445 315L1462 330" stroke="#50506e" stroke-opacity="0.073" stroke-width="1.2"/><path d="M481 480L416 510M598 450L479 510M678 435L596 480M753 420L678 465M845 390L778 435M908 375L848 420M966 360L931 390M1034 330L989 375M1079 315L1054 345M1120 300L1100 330M1148 300L1140 315M1181 285L1171 315M1207 285L1204 300M1232 270L1232 300M1255 270L1260 300M1283 285L1293 315M1309 285L1323 315M1344 300L1363 330M1384 315L1408 345M1429 330L1458 360" stroke="#50506e" stroke-opacity="0.092" stroke-width="1.2"/><path d="M479 510L419 540M596 480L404 585M678 465L404 630M778 435L419 675M848 420L409 750M931 390L424 825M989 375L481 882M1054 345L605 882M1100 330L728 882M1140 315L852 882M1171 315L976 882M1204 300L1099 882M1232 300L1223 882M1260 300L1347 882M1293 315L1462 855M1323 315L1466 615M1363 330L1469 495M1408 345L1469 420M1458 360L1473 375" stroke="#50506e" stroke-opacity="0.110" stroke-width="1.2"/><path d="M430 465.9H1454M430 446.3H1454M430 428.9H1454" stroke="#50506e" stroke-opacity="0.028" stroke-width="1.6"/><path d="M430 513.3H1454M430 488.0H1454" stroke="#50506e" stroke-opacity="0.057" stroke-width="1.6"/><path d="M430 542.4H1454" stroke="#50506e" stroke-opacity="0.085" stroke-width="1.6"/><path d="M430 576.3H1454" stroke="#50506e" stroke-opacity="0.113" stroke-width="1.6"/><path d="M430 794.9H1454M430 722.4H1454M430 664.1H1454M430 616.3H1454" stroke="#50506e" stroke-opacity="0.170" stroke-width="1.6"/><path d="M430 572.7H1454M430 569.1H1454M430 565.6H1454M430 562.1H1454M430 558.7H1454M430 555.3H1454M430 552.0H1454M430 548.8H1454M430 545.6H1454M430 539.3H1454M430 536.2H1454M430 533.2H1454M430 530.2H1454M430 527.3H1454M430 524.4H1454M430 521.6H1454M430 518.8H1454M430 516.0H1454M430 510.6H1454M430 508.0H1454M430 505.3H1454M430 502.8H1454M430 500.2H1454M447 465L412 480M452 465L417 480M463 465L394 495M469 465L400 495M474 465L406 495M480 465L412 495M519 450L418 495M524 450L424 495M529 450L397 510M535 450L404 510M540 450L410 510M550 450L422 510M556 450L397 525M593 435L403 525M598 435L410 525M603 435L416 525M608 435L423 525M613 435L399 540M618 435L405 540M623 435L412 540M662 420L396 555M667 420L403 555M672 420L410 555M677 420L446 540M681 420L453 540M686 420L459 540M691 420L466 540M724 405L473 540M728 405L507 525M737 405L520 525M742 405L527 525M746 405L533 525M751 405L566 510M755 405L572 510M786 390L579 510M790 390L585 510M794 390L591 510M798 390L597 510M807 390L634 495M811 390L640 495M816 390L646 495M844 375L652 495M848 375L658 495M852 375L688 480M856 375L694 480M860 375L699 480M864 375L705 480M872 375L739 465M898 360L744 465M902 360L750 465M905 360L755 465M909 360L761 465M913 360L766 465M917 360L793 450M921 360L798 450M924 360L803 450M952 345L814 450M955 345L819 450M959 345L843 435M962 345L848 435M966 345L853 435M969 345L858 435M973 345L864 435M976 345L869 435M998 330L891 420M1004 330L901 420M1008 330L906 420M1011 330L910 420M1014 330L915 420M1017 330L936 405M1021 330L941 405M1024 330L945 405M1043 315L950 405M1046 315L954 405M1052 315L963 405M1055 315L982 390M1058 315L987 390M1061 315L991 390M1064 315L995 390M1067 315L999 390M1070 315L1004 390M1086 300L1008 390M1089 300L1025 375M1095 300L1033 375M1098 300L1037 375M1100 300L1041 375M1103 300L1045 375M1106 300L1049 375M1109 300L1053 375M1112 300L1068 360M1114 300L1072 360M1127 285L1076 360M1133 285L1083 360M1135 285L1087 360M1138 285L1091 360M1140 285L1095 360M1143 285L1107 345M1145 285L1111 345M1148 285L1114 345M1150 285L1118 345M1153 285L1121 345M1158 285L1129 345M1161 285L1132 345M1170 270L1136 345M1172 270L1139 345M1175 270L1143 345M1177 270L1152 330M1179 270L1156 330M1182 270L1159 330M1184 270L1162 330M1189 270L1169 330M1191 270L1172 330M1193 270L1175 330M1195 270L1179 330M1198 270L1182 330M1200 270L1185 330M1202 270L1189 330M1205 270L1192 330M1207 270L1195 330M1212 270L1202 330M1214 270L1205 330M1216 270L1208 330M1219 270L1212 330M1221 270L1216 315M1223 270L1219 315M1225 270L1223 315M1228 270L1226 315M1230 270L1229 315M1235 270L1235 315M1237 270L1238 315M1239 270L1241 315M1242 270L1244 315M1244 270L1247 315M1246 270L1250 315M1248 270L1253 315M1251 270L1258 330M1253 270L1261 330M1258 270L1268 330M1260 270L1271 330M1262 270L1274 330M1265 270L1277 330M1267 270L1281 330M1269 270L1284 330M1272 270L1287 330M1274 270L1291 330M1276 270L1294 330M1281 270L1301 330M1283 270L1304 330M1285 270L1307 330M1288 270L1310 330M1290 270L1314 330M1292 270L1317 330M1295 270L1327 345M1297 270L1330 345M1299 270L1334 345M1311 285L1341 345M1314 285L1344 345M1316 285L1348 345M1319 285L1351 345M1321 285L1355 345M1324 285L1359 345M1327 285L1371 360M1329 285L1375 360M1332 285L1379 360M1337 285L1386 360M1339 285L1390 360M1342 285L1394 360M1355 300L1397 360M1358 300L1401 360M1361 300L1416 375M1363 300L1420 375M1366 300L1424 375M1369 300L1428 375M1375 300L1436 375M1377 300L1440 375M1380 300L1444 375M1383 300L1461 390M1399 315L1466 390M1402 315L1470 390M1405 315L1460 375M1408 315L1465 375M1411 315L1469 375M1417 315L1462 360M1420 315L1466 360M1423 315L1469 360M1442 330L1473 360M1445 330L1461 345M1449 330L1465 345M1452 330L1468 345M1455 330L1472 345M1459 330L1475 345" stroke="#50506e" stroke-opacity="0.011" stroke-width="1"/><path d="M430 612.0H1454M430 607.7H1454M430 603.6H1454M430 599.5H1454M430 595.4H1454M430 591.5H1454M430 587.6H1454M430 583.8H1454M430 580.0H1454M446 540L417 555M453 540L424 555M459 540L403 570M466 540L410 570M473 540L417 570M507 525L424 570M520 525L412 585M527 525L419 585M533 525L400 600M566 510L408 600M572 510L442 585M579 510L449 585M585 510L457 585M591 510L464 585M597 510L472 585M634 495L511 570M640 495L518 570M646 495L526 570M652 495L533 570M658 495L564 555M688 480L571 555M694 480L578 555M699 480L585 555M705 480L614 540M739 465L628 540M744 465L635 540M750 465L641 540M755 465L670 525M761 465L676 525M766 465L683 525M793 450L689 525M798 450L696 525M803 450L722 510M814 450L735 510M819 450L741 510M843 435L747 510M848 435L773 495M853 435L779 495M858 435L785 495M864 435L791 495M869 435L797 495M891 420L820 480M901 420L832 480M906 420L838 480M910 420L843 480M915 420L866 465M936 405L871 465M941 405L877 465M945 405L882 465M950 405L888 465M954 405L893 465M963 405L919 450M982 390L924 450M987 390L929 450M991 390L935 450M995 390L954 435M999 390L959 435M1004 390L964 435M1008 390L969 435M1025 375L974 435M1033 375L984 435M1037 375L1001 420M1041 375L1006 420M1045 375L1011 420M1049 375L1015 420M1053 375L1020 420M1068 360L1025 420M1072 360L1040 405M1076 360L1045 405M1083 360L1054 405M1087 360L1058 405M1091 360L1063 405M1095 360L1067 405M1107 345L1081 390M1111 345L1085 390M1114 345L1089 390M1118 345L1094 390M1121 345L1098 390M1129 345L1106 390M1132 345L1111 390M1136 345L1115 390M1139 345L1126 375M1143 345L1130 375M1152 330L1134 375M1156 330L1138 375M1159 330L1142 375M1162 330L1146 375M1169 330L1154 375M1172 330L1158 375M1175 330L1162 375M1179 330L1166 375M1182 330L1170 375M1185 330L1178 360M1189 330L1182 360M1192 330L1186 360M1195 330L1189 360M1202 330L1197 360M1205 330L1201 360M1208 330L1204 360M1212 330L1208 360M1216 315L1212 360M1219 315L1216 360M1223 315L1220 360M1226 315L1223 360M1229 315L1227 360M1235 315L1235 360M1238 315L1239 360M1241 315L1242 360M1244 315L1246 360M1247 315L1250 360M1250 315L1254 360M1253 315L1257 360M1258 330L1261 360M1261 330L1265 360M1268 330L1273 360M1271 330L1276 360M1274 330L1280 360M1277 330L1284 360M1281 330L1288 360M1284 330L1291 360M1287 330L1299 375M1291 330L1303 375M1294 330L1307 375M1301 330L1315 375M1304 330L1319 375M1307 330L1323 375M1310 330L1327 375M1314 330L1331 375M1317 330L1336 375M1327 345L1340 375M1330 345L1344 375M1334 345L1355 390M1341 345L1363 390M1344 345L1367 390M1348 345L1372 390M1351 345L1376 390M1355 345L1380 390M1359 345L1384 390M1371 360L1389 390M1375 360L1402 405M1379 360L1407 405M1386 360L1416 405M1390 360L1420 405M1394 360L1425 405M1397 360L1429 405M1401 360L1445 420M1416 375L1449 420M1420 375L1454 420M1424 375L1459 420M1428 375L1464 420M1436 375L1461 405M1440 375L1466 405M1444 375L1470 405" stroke="#50506e" stroke-opacity="0.022" stroke-width="1"/><path d="M430 653.8H1454M430 648.8H1454M430 643.9H1454M430 639.1H1454M430 634.3H1454M430 629.7H1454M430 625.1H1454M430 620.7H1454M442 585L416 600M449 585L423 600M457 585L405 615M464 585L413 615M472 585L421 615M511 570L413 630M518 570L421 630M526 570L405 645M533 570L437 630M564 555L446 630M571 555L454 630M578 555L462 630M585 555L493 615M614 540L501 615M628 540L517 615M635 540L547 600M641 540L555 600M670 525L562 600M676 525L570 600M683 525L599 585M689 525L606 585M696 525L614 585M722 510L621 585M735 510L656 570M741 510L663 570M747 510L670 570M773 495L678 570M779 495L704 555M785 495L711 555M791 495L718 555M797 495L725 555M820 480L749 540M832 480L763 540M838 480L770 540M843 480L776 540M866 465L800 525M871 465L806 525M877 465L813 525M882 465L819 525M888 465L841 510M893 465L847 510M919 450L860 510M924 450L866 510M929 450L887 495M935 450L893 495M954 435L899 495M959 435L905 495M964 435L911 495M969 435L930 480M974 435L935 480M984 435L947 480M1001 420L953 480M1006 420L970 465M1011 420L976 465M1015 420L981 465M1020 420L987 465M1025 420L992 465M1040 405L998 465M1045 405L1014 450M1054 405L1024 450M1058 405L1030 450M1063 405L1035 450M1067 405L1040 450M1081 390L1054 435M1085 390L1059 435M1089 390L1064 435M1094 390L1069 435M1098 390L1074 435M1106 390L1084 435M1111 390L1096 420M1115 390L1101 420M1126 375L1106 420M1130 375L1111 420M1134 375L1116 420M1138 375L1120 420M1142 375L1125 420M1146 375L1130 420M1154 375L1139 420M1158 375L1149 405M1162 375L1153 405M1166 375L1158 405M1170 375L1162 405M1178 360L1167 405M1182 360L1171 405M1186 360L1176 405M1189 360L1180 405M1197 360L1190 405M1201 360L1194 405M1204 360L1199 405M1208 360L1203 405M1212 360L1208 405M1216 360L1212 405M1220 360L1217 405M1223 360L1221 405M1227 360L1226 405M1235 360L1235 405M1239 360L1239 405M1242 360L1244 405M1246 360L1248 405M1250 360L1253 405M1254 360L1257 405M1257 360L1262 405M1261 360L1266 405M1265 360L1271 405M1273 360L1280 405M1276 360L1285 405M1280 360L1289 405M1284 360L1294 405M1288 360L1298 405M1291 360L1303 405M1299 375L1307 405M1303 375L1312 405M1307 375L1316 405M1315 375L1330 420M1319 375L1335 420M1323 375L1340 420M1327 375L1345 420M1331 375L1349 420M1336 375L1354 420M1340 375L1359 420M1344 375L1364 420M1355 390L1368 420M1363 390L1385 435M1367 390L1390 435M1372 390L1395 435M1376 390L1400 435M1380 390L1405 435M1384 390L1410 435M1389 390L1415 435M1402 405L1430 450M1407 405L1435 450M1416 405L1445 450M1420 405L1451 450M1425 405L1456 450M1429 405L1461 450M1445 420L1466 450M1449 420L1461 435M1454 420L1466 435M1459 420L1471 435" stroke="#50506e" stroke-opacity="0.033" stroke-width="1"/><path d="M430 691.7H1454M430 686.0H1454M430 680.3H1454M430 674.8H1454M430 669.4H1454M430 658.9H1454M437 630L413 645M446 630L422 645M454 630L407 660M462 630L416 660M493 615L424 660M501 615L410 675M517 615L428 675M547 600L437 675M555 600L446 675M562 600L477 660M570 600L485 660M599 585L494 660M606 585L503 660M614 585L532 645M621 585L540 645M656 570L577 630M663 570L585 630M670 570L594 630M678 570L602 630M704 555L629 615M711 555L637 615M718 555L645 615M725 555L653 615M749 540L678 600M763 540L694 600M770 540L702 600M776 540L726 585M800 525L734 585M806 525L741 585M813 525L749 585M819 525L772 570M841 510L779 570M847 510L786 570M860 510L816 555M866 510L822 555M887 495L829 555M893 495L836 555M899 495L857 540M905 495L864 540M911 495L871 540M930 480L877 540M935 480L884 540M947 480L910 525M953 480L917 525M970 465L923 525M976 465L930 525M981 465L947 510M987 465L954 510M992 465L960 510M998 465L966 510M1014 450L972 510M1024 450L995 495M1030 450L1001 495M1035 450L1007 495M1040 450L1013 495M1054 435L1028 480M1059 435L1033 480M1064 435L1039 480M1069 435L1045 480M1074 435L1051 480M1084 435L1070 465M1096 420L1075 465M1101 420L1081 465M1106 420L1086 465M1111 420L1092 465M1116 420L1097 465M1120 420L1103 465M1125 420L1108 465M1130 420L1119 450M1139 420L1130 450M1149 405L1135 450M1153 405L1140 450M1158 405L1145 450M1162 405L1151 450M1167 405L1156 450M1171 405L1161 450M1176 405L1166 450M1180 405L1172 450M1190 405L1185 435M1194 405L1190 435M1199 405L1195 435M1203 405L1200 435M1208 405L1205 435M1212 405L1210 435M1217 405L1215 435M1221 405L1220 435M1226 405L1225 435M1235 405L1235 435M1239 405L1240 435M1244 405L1245 435M1248 405L1250 435M1253 405L1255 435M1257 405L1260 435M1262 405L1265 435M1266 405L1270 435M1271 405L1275 435M1280 405L1285 435M1285 405L1290 435M1289 405L1298 450M1294 405L1303 450M1298 405L1309 450M1303 405L1314 450M1307 405L1319 450M1312 405L1324 450M1316 405L1330 450M1330 420L1340 450M1335 420L1345 450M1340 420L1351 450M1345 420L1362 465M1349 420L1367 465M1354 420L1373 465M1359 420L1378 465M1364 420L1384 465M1368 420L1389 465M1385 435L1400 465M1390 435L1413 480M1395 435L1419 480M1400 435L1425 480M1405 435L1431 480M1410 435L1436 480M1415 435L1442 480M1430 450L1457 495M1435 450L1463 495M1445 450L1465 480M1451 450L1461 465M1456 450L1466 465" stroke="#50506e" stroke-opacity="0.043" stroke-width="1"/><path d="M430 728.9H1454M430 716.0H1454M430 709.7H1454M430 703.6H1454M430 697.6H1454M428 675L406 690M437 675L415 690M446 675L425 690M477 660L412 705M485 660L422 705M494 660L410 720M503 660L420 720M532 645L430 720M540 645L460 705M577 630L479 705M585 630L507 690M594 630L517 690M602 630L526 690M629 615L535 690M637 615L563 675M645 615L572 675M653 615L581 675M678 600L607 660M694 600L625 660M702 600L651 645M726 585L659 645M734 585L668 645M741 585L676 645M749 585L700 630M772 570L709 630M779 570L717 630M786 570L725 630M816 555L756 615M822 555L764 615M829 555L787 600M836 555L794 600M857 540L802 600M864 540L810 600M871 540L831 585M877 540L838 585M884 540L846 585M910 525L873 570M917 525L880 570M923 525L888 570M930 525L895 570M947 510L902 570M954 510L920 555M960 510L927 555M966 510L934 555M972 510L941 555M995 495L965 540M1001 495L972 540M1007 495L979 540M1013 495L985 540M1028 480L1001 525M1033 480L1007 525M1039 480L1014 525M1045 480L1020 525M1051 480L1027 525M1070 465L1047 510M1075 465L1054 510M1081 465L1060 510M1086 465L1066 510M1092 465L1072 510M1097 465L1079 510M1103 465L1091 495M1108 465L1097 495M1119 450L1103 495M1130 450L1115 495M1135 450L1121 495M1140 450L1127 495M1145 450L1133 495M1151 450L1143 480M1156 450L1148 480M1161 450L1154 480M1166 450L1160 480M1172 450L1166 480M1185 435L1177 480M1190 435L1183 480M1195 435L1189 480M1200 435L1195 480M1205 435L1200 480M1210 435L1206 480M1215 435L1212 480M1220 435L1218 480M1225 435L1223 480M1235 435L1235 480M1240 435L1241 480M1245 435L1246 480M1250 435L1252 480M1255 435L1258 480M1260 435L1264 480M1265 435L1269 480M1270 435L1275 480M1275 435L1281 480M1285 435L1292 480M1290 435L1298 480M1298 450L1304 480M1303 450L1310 480M1309 450L1315 480M1314 450L1321 480M1319 450L1327 480M1324 450L1337 495M1330 450L1343 495M1340 450L1355 495M1345 450L1361 495M1351 450L1367 495M1362 465L1373 495M1367 465L1379 495M1373 465L1391 510M1378 465L1397 510M1384 465L1404 510M1389 465L1410 510M1400 465L1422 510M1413 480L1436 525M1419 480L1443 525M1425 480L1449 525M1431 480L1456 525M1436 480L1462 525M1442 480L1469 525M1457 495L1466 510" stroke="#50506e" stroke-opacity="0.054" stroke-width="1"/><path d="M430 877.2H1454M430 867.0H1454M430 857.2H1454M430 847.6H1454M430 838.2H1454M430 829.1H1454M430 820.2H1454M430 811.6H1454M430 803.1H1454M430 786.8H1454M430 779.0H1454M430 771.3H1454M430 763.8H1454M430 756.5H1454M430 749.4H1454M430 742.4H1454M430 735.6H1454M430 720L409 735M460 705L419 735M479 705L419 750M507 690L410 765M517 690L421 765M526 690L412 780M535 690L423 780M563 675L415 795M572 675L408 810M581 675L419 810M607 660L412 825M625 660L418 840M651 645L413 855M659 645L424 855M668 645L420 870M676 645L419 882M700 630L431 882M709 630L444 882M717 630L456 882M725 630L469 882M756 615L493 882M764 615L506 882M787 600L518 882M794 600L530 882M802 600L543 882M810 600L555 882M831 585L567 882M838 585L580 882M846 585L592 882M873 570L617 882M880 570L629 882M888 570L642 882M895 570L654 882M902 570L666 882M920 555L679 882M927 555L691 882M934 555L703 882M941 555L716 882M965 540L741 882M972 540L753 882M979 540L765 882M985 540L778 882M1001 525L790 882M1007 525L802 882M1014 525L815 882M1020 525L827 882M1027 525L840 882M1047 510L864 882M1054 510L877 882M1060 510L889 882M1066 510L901 882M1072 510L914 882M1079 510L926 882M1091 495L938 882M1097 495L951 882M1103 495L963 882M1115 495L988 882M1121 495L1000 882M1127 495L1013 882M1133 495L1025 882M1143 480L1037 882M1148 480L1050 882M1154 480L1062 882M1160 480L1074 882M1166 480L1087 882M1177 480L1112 882M1183 480L1124 882M1189 480L1136 882M1195 480L1149 882M1200 480L1161 882M1206 480L1173 882M1212 480L1186 882M1218 480L1198 882M1223 480L1211 882M1235 480L1235 882M1241 480L1248 882M1246 480L1260 882M1252 480L1272 882M1258 480L1285 882M1264 480L1297 882M1269 480L1309 882M1275 480L1322 882M1281 480L1334 882M1292 480L1359 882M1298 480L1371 882M1304 480L1384 882M1310 480L1396 882M1315 480L1408 882M1321 480L1421 882M1327 480L1433 882M1337 495L1445 882M1343 495L1458 882M1355 495L1464 825M1361 495L1465 795M1367 495L1465 765M1373 495L1464 735M1379 495L1462 705M1391 510L1465 690M1397 510L1462 660M1404 510L1464 645M1410 510L1465 630M1422 510L1467 600M1436 525L1467 585M1443 525L1467 570M1449 525L1466 555M1456 525L1464 540" stroke="#50506e" stroke-opacity="0.065" stroke-width="1"/></g></svg>
      <div class="a" style="left:-20px;top:-20px;width:840px;height:840px;padding:20px;transform-origin:20px 20px;transform:matrix3d(0.65337282,0,0,0,-0.90265665,-0.09491418,0,-0.00073119017,0,0,1,0,968.50647,436.93812,0,1);background:repeating-conic-gradient(#292b36 0 25%,#3a3c48 0 50%) 0 0/160px 160px;background-clip:content-box;background-origin:content-box">
        <div class="a" style="left:20px;top:20px;width:800px;height:800px;background:repeating-conic-gradient(rgba(0,0,0,0.045) 0 25%,transparent 0 50%) 0 0/20px 20px;-webkit-mask-image:linear-gradient(transparent 10%,#000 60%);mask-image:linear-gradient(transparent 10%,#000 60%)"></div>
        <div class="a" style="left:20px;top:20px;width:800px;height:800px;background:repeating-conic-gradient(rgba(0,0,0,0.10) 0 25%,transparent 0 50%) 0 0/20px 20px;-webkit-mask-image:linear-gradient(transparent 10%,#000 60%),repeating-conic-gradient(transparent 0 25%,#000 0 50%);-webkit-mask-size:100% 100%,160px 160px;-webkit-mask-composite:source-in;mask-image:linear-gradient(transparent 10%,#000 60%),repeating-conic-gradient(transparent 0 25%,#000 0 50%);mask-size:100% 100%,160px 160px;mask-composite:intersect"></div>
      </div>
      <svg style="left:0;top:0" width="1536" height="948"><path d="M593.6 869.8L609.4 869.8L613.9 881.0L598.2 881.0ZM625.1 869.8L640.8 869.8L645.1 881.0L629.5 881.0ZM656.6 869.8L672.3 869.8L676.4 881.0L660.7 881.0ZM688.1 869.8L703.8 869.8L707.6 881.0L692.0 881.0ZM845.5 869.8L861.2 869.8L863.9 881.0L848.3 881.0ZM877.0 869.8L892.7 869.8L895.2 881.0L879.6 881.0ZM908.5 869.8L924.2 869.8L926.4 881.0L910.8 881.0ZM939.9 869.8L955.7 869.8L957.7 881.0L942.1 881.0ZM1097.4 869.8L1113.1 869.8L1114.0 881.0L1098.4 881.0ZM1128.9 869.8L1144.6 869.8L1145.2 881.0L1129.6 881.0ZM1160.3 869.8L1176.1 869.8L1176.5 881.0L1160.9 881.0ZM1191.8 869.8L1207.6 869.8L1207.8 881.0L1192.1 881.0ZM1349.2 869.8L1365.0 869.8L1364.0 881.0L1348.4 881.0ZM1380.7 869.8L1396.5 869.8L1395.3 881.0L1379.7 881.0ZM1412.2 869.8L1428.0 869.8L1426.6 881.0L1410.9 881.0ZM1443.7 869.8L1459.4 869.8L1457.8 881.0L1442.2 881.0Z" fill="#353539" stroke="#353539" stroke-width=".6"/><path d="M609.4 869.8L625.1 869.8L629.5 881.0L613.9 881.0ZM640.8 869.8L656.6 869.8L660.7 881.0L645.1 881.0ZM672.3 869.8L688.1 869.8L692.0 881.0L676.4 881.0ZM703.8 869.8L719.6 869.8L723.3 881.0L707.6 881.0ZM861.2 869.8L877.0 869.8L879.6 881.0L863.9 881.0ZM892.7 869.8L908.5 869.8L910.8 881.0L895.2 881.0ZM924.2 869.8L939.9 869.8L942.1 881.0L926.4 881.0ZM955.7 869.8L971.4 869.8L973.3 881.0L957.7 881.0ZM1113.1 869.8L1128.9 869.8L1129.6 881.0L1114.0 881.0ZM1144.6 869.8L1160.3 869.8L1160.9 881.0L1145.2 881.0ZM1176.1 869.8L1191.8 869.8L1192.1 881.0L1176.5 881.0ZM1207.6 869.8L1223.3 869.8L1223.4 881.0L1207.8 881.0ZM1365.0 869.8L1380.7 869.8L1379.7 881.0L1364.0 881.0ZM1396.5 869.8L1412.2 869.8L1410.9 881.0L1395.3 881.0ZM1428.0 869.8L1443.7 869.8L1442.2 881.0L1426.6 881.0ZM1459.4 869.8L1475.2 869.8L1473.4 881.0L1457.8 881.0Z" fill="#313135" stroke="#313135" stroke-width=".6"/><path d="M719.6 869.8L735.3 869.8L738.9 881.0L723.3 881.0ZM751.0 869.8L766.8 869.8L770.1 881.0L754.5 881.0ZM782.5 869.8L798.3 869.8L801.4 881.0L785.8 881.0ZM814.0 869.8L829.8 869.8L832.7 881.0L817.0 881.0ZM971.4 869.8L987.2 869.8L989.0 881.0L973.3 881.0ZM1002.9 869.8L1018.7 869.8L1020.2 881.0L1004.6 881.0ZM1034.4 869.8L1050.1 869.8L1051.5 881.0L1035.8 881.0ZM1065.9 869.8L1081.6 869.8L1082.7 881.0L1067.1 881.0ZM1223.3 869.8L1239.0 869.8L1239.0 881.0L1223.4 881.0ZM1254.8 869.8L1270.5 869.8L1270.3 881.0L1254.6 881.0ZM1286.3 869.8L1302.0 869.8L1301.5 881.0L1285.9 881.0ZM1317.8 869.8L1333.5 869.8L1332.8 881.0L1317.2 881.0Z" fill="#47474c" stroke="#47474c" stroke-width=".6"/><path d="M735.3 869.8L751.0 869.8L754.5 881.0L738.9 881.0ZM766.8 869.8L782.5 869.8L785.8 881.0L770.1 881.0ZM798.3 869.8L814.0 869.8L817.0 881.0L801.4 881.0ZM829.8 869.8L845.5 869.8L848.3 881.0L832.7 881.0ZM987.2 869.8L1002.9 869.8L1004.6 881.0L989.0 881.0ZM1018.7 869.8L1034.4 869.8L1035.8 881.0L1020.2 881.0ZM1050.1 869.8L1065.9 869.8L1067.1 881.0L1051.5 881.0ZM1081.6 869.8L1097.4 869.8L1098.4 881.0L1082.7 881.0ZM1239.0 869.8L1254.8 869.8L1254.6 881.0L1239.0 881.0ZM1270.5 869.8L1286.3 869.8L1285.9 881.0L1270.3 881.0ZM1302.0 869.8L1317.8 869.8L1317.2 881.0L1301.5 881.0ZM1333.5 869.8L1349.2 869.8L1348.4 881.0L1332.8 881.0Z" fill="#3e3e43" stroke="#3e3e43" stroke-width=".6"/></svg>
            <!-- sky dome -->
      <svg style="left:0;top:0" width="1536" height="948"><path d="M1092 147.3 Q1097 146.8 1099.5 147.5 Q1100 149 1099 149.3 Q1096 148.5 1092 148.2 Z" fill="#f4f6ff"/></svg>
      <svg style="left:0;top:0" width="1536" height="948">
        <defs>
          <radialGradient id="skyg" cx="1198" cy="150" r="60" gradientUnits="userSpaceOnUse"><stop offset="0" stop-color="#2e2e2e"/><stop offset=".6" stop-color="#4a4a4a"/><stop offset="1" stop-color="#7a7a7a"/></radialGradient>
          <radialGradient id="sph" cx="1185" cy="655" r="72" gradientUnits="userSpaceOnUse"><stop offset="0" stop-color="#dedee4"/><stop offset=".5" stop-color="#d2d3da"/><stop offset=".78" stop-color="#b4b8cc"/><stop offset="1" stop-color="#5e6690"/></radialGradient>
          <radialGradient id="shd" cx="1266" cy="638" r="46" gradientUnits="userSpaceOnUse"><stop offset="0" stop-color="#0c0f1a" stop-opacity=".95"/><stop offset=".45" stop-color="#0e111c" stop-opacity=".8"/><stop offset="1" stop-color="#0e111c" stop-opacity="0"/></radialGradient>
          <pattern id="chk" width="3" height="3" patternUnits="userSpaceOnUse"><rect width="3" height="3" fill="#1a1a1a"/><rect width="1.5" height="1.5" fill="#7a7a7a"/><rect x="1.5" y="1.5" width="1.5" height="1.5" fill="#7a7a7a"/></pattern>
          <radialGradient id="chrome" cx="1212" cy="381" r="26" gradientUnits="userSpaceOnUse"><stop offset="0" stop-color="#222"/><stop offset=".3" stop-color="#555"/><stop offset=".55" stop-color="#f4f4f4"/><stop offset=".8" stop-color="#888"/><stop offset="1" stop-color="#111"/></radialGradient>
        </defs>
        <path d="M1143.7 196.9 A54.7 54.7 0 0 1 1253.1 196.9 A99.4 99.4 0 0 0 1143.7 196.9 Z" fill="url(#skyg)" stroke="#101010" stroke-width="1.2"/>
        <path d="M1145.6 195.5 A52.9 52.9 0 0 1 1251.2 195.5" fill="none" stroke="#f6f6f6" stroke-width="2.8"/>
        <g fill="#8e8e8e">
          <path d="M1181 150 L1184 149 L1187 160 L1190 159 L1188 168 L1181 162 L1184 161 Z"/>
          <path d="M1218 150 L1215 149 L1211 160 L1208 159 L1210 168 L1217 162 L1214 161 Z"/>
          <path d="M1153 172 L1155 169 L1165 174 L1166 171 L1171 179 L1162 181 L1163 178 Z"/>
          <path d="M1243 171 L1241 168 L1231 173 L1230 170 L1225 178 L1234 180 L1233 177 Z"/>
        </g>
        <!-- reflection sphere -->
        <circle cx="1219.4" cy="389.4" r="19" fill="#707070" stroke="#303030" stroke-width="1.2"/>
        <path d="M1202 392 Q1200 376 1214 371.5 Q1222 370 1229 373 Q1218 378 1212 390 Q1209 398 1206 400 Q1202 397 1202 392 Z" fill="#f6f6f6"/>
        <path d="M1222 372 Q1234 374 1237 384 Q1232 378 1224 380 Z" fill="#5a5a5a"/>
        <path d="M1229 372.5 Q1236 376 1237.5 386 L1233 384 Q1231 377 1226 375 Z" fill="#d8d8d8"/>
        <path d="M1206 400 Q1210 396 1215 401 Q1222 406 1230 404 Q1224 409 1214 408 Q1208 406 1206 400 Z" fill="#0c0c0c"/>
        <path d="M1225 405 Q1234 400 1237 392 Q1238 400 1232 405 Q1228 408 1223 408 Z" fill="#f0f0f0"/>
        <circle cx="1219" cy="390" r="8" fill="#3a3a3a"/>
        <path d="M1212 387 Q1214 382 1219 383 Q1216 386 1215 391 Z" fill="#e8e8e8"/>
        <ellipse cx="1221" cy="391" rx="4" ry="3.4" fill="#0c0c0c"/>
        <path d="M1214 394 Q1219 398 1226 395 Q1220 400 1214 394 Z" fill="#f4f4f4"/>
        <!-- player start -->
        <ellipse cx="1218.4" cy="519.4" rx="8" ry="3.8" fill="#d8d8d8" stroke="#222" stroke-width=".6"/>
        <path d="M1209.5 479 L1211 478.5 L1219.5 517 L1217.5 517.5 Z" fill="#c8c8c8"/>
        <path d="M1210 479 L1227.3 483 L1214.6 492.8 Z" fill="#b4b4b4" stroke="#333" stroke-width=".5"/>
        <path d="M1226.5 494.7 L1226.5 483 L1224 484 L1228 478.2 L1232 484 L1229.5 483 L1229.5 494.7 Z" fill="#6aa8e8"/>
        <path d="M1220 496.5 Q1231 493.5 1242.5 496 Q1246 498.5 1246 509 Q1246 518.5 1241.5 517.8 Q1239 517 1236.5 511.5 L1226 509.5 Q1223.5 513.5 1221 513.5 Q1217.8 513 1217.6 507 Q1217.5 499.5 1220 496.5 Z" fill="#d8d8d8" stroke="#141414" stroke-width=".7"/>
        <ellipse cx="1228" cy="501.3" rx="2.2" ry="1" fill="#5a9ae0"/><path d="M1220 501.5 H1223.5 M1221.8 499.7 V503.3" stroke="#222" stroke-width="1"/>
        <g fill="#333"><circle cx="1236" cy="501" r=".8"/><circle cx="1238.5" cy="503" r=".8"/><circle cx="1236" cy="505" r=".8"/><circle cx="1233.5" cy="503" r=".8"/></g>
        <!-- sphere shadow -->
        <ellipse cx="1258" cy="642" rx="48" ry="42" fill="url(#shd)"/>
        <!-- sphere -->
        <circle cx="1206.5" cy="659" r="48.3" fill="url(#sph)" stroke="#e8a424" stroke-width="1.6"/>
        <!-- gizmo -->
        <path d="M1198.2 602.4 L1206 578.7 L1213.1 602.4 Z" fill="#2f7fe6"/>
        <rect x="1203.6" y="601" width="4.6" height="10" fill="#2f7fe6"/>
        <path d="M1207 609 Q1212 614 1214 621 Q1213 626 1208 627 Z" fill="#7a1810"/>
        <path d="M1203.3 611 L1208.5 611 L1208.5 655 L1203.3 655 Z" fill="url(#chk)"/>
        <path d="M1203.3 611 L1208.5 611 L1208.5 655 L1203.3 655 Z" fill="#2f6ad0" opacity=".45"/>
        <path d="M1208 637.5 L1232 637.5 M1208 644 L1230 644 M1232 637.5 L1232 656" stroke="#1d3e86" stroke-width="1.8" fill="none"/>
        <path d="M1208 644 L1230 644" stroke="#7a1a10" stroke-width="1.6"/>
        <path d="M1232 640 L1232 656" stroke="#3c6a10" stroke-width="1.6"/>
        <rect x="1212" y="657" width="42" height="5" fill="url(#chk)"/>
        <rect x="1212" y="657" width="42" height="5" fill="#4a8a10" opacity=".45"/>
        <rect x="1254" y="657.3" width="22" height="4.6" fill="#6cb412"/>
        <path d="M1275.3 652.3 L1299.9 659.4 L1275.3 666.5 Z" fill="#6cb412"/>
        <circle cx="1206.2" cy="659.4" r="6.8" fill="url(#chk)"/>
        <circle cx="1206.2" cy="659.4" r="6.8" fill="#888" opacity=".25"/>
      </svg>

    </div>
  </div>
  <svg style="left:427px;top:144px" width="12" height="12"><path d="M0 0 L10 0 L0 10 Z" fill="#a08020"/></svg>
  <!-- viewport buttons -->
  <div class="vbtn" style="left:433px;width:22px"><svg style="left:6px;top:9px" width="9" height="6"><path d="M0 0 L9 0 L4.5 5 Z" fill="#111"/></svg></div>
  <div class="vbtn" style="left:459px;width:95px"></div>
  <div class="vbtn" style="left:558px;width:47px"></div>
  <div class="vbtn" style="left:609px;width:44px"></div>
    <!-- viewport button icons -->
  <svg style="left:465px;top:155px" width="18" height="16" viewBox="0 0 18 16">
    <path d="M2 9 L10 3 L16 5 L16 8 L8 14 L2 12 Z" fill="#4a90e8"/>
    <path d="M2 9 L10 3 L16 5 L8 11 Z" fill="#8ec0f8"/>
    <path d="M6 8 L10 5.5 L13 6.5 L9 9 Z" fill="#2a6ad0"/>
  </svg>
  <svg style="left:564px;top:154px" width="18" height="18" viewBox="0 0 18 18">
    <path d="M2 4 L9 1 L16 4 L9 7 Z" fill="#8ab8e8"/>
    <path d="M2 4 L9 7 L9 17 L2 13 Z" fill="#1e3ec8"/>
    <path d="M9 7 L16 4 L16 13 L9 17 Z" fill="#2c5ae4"/>
  </svg>
  <!-- axis indicator -->
  <svg style="left:440px;top:820px" width="60" height="50" viewBox="0 0 60 50">
    <path d="M18.4 10 L18.4 31.7" stroke="#0a14f0" stroke-width="1.3"/>
    <path d="M18.4 31.5 L43 31.5" stroke="#10e010" stroke-width="1.3"/>
    <text x="21.4" y="13.6" font-family="Liberation Sans" font-size="11.5" fill="#2a30f0" stroke="#2a30f0" stroke-width=".3">Z</text>
    <text x="21.4" y="25.8" font-family="Liberation Sans" font-size="11.5" fill="#f41818" stroke="#f41818" stroke-width=".3">X</text>
    <text x="44.2" y="38.2" font-family="Liberation Sans" font-size="12" fill="#10e010" stroke="#10e010" stroke-width=".3">Y</text>
    <circle cx="9" cy="41.5" r="6" fill="#a8aabe"/>
    <circle cx="9" cy="41.5" r="4.8" fill="#8a8a96"/>
    <text x="6" y="45.6" font-family="Liberation Sans" font-weight="bold" font-size="10" fill="#b8b8c4">?</text>
  </svg>


  <!-- CONTENT BROWSER -->
  <div class="a" style="left:4px;top:889px;width:150px;height:22px;background:#3b3b3b;border-radius:2px 2px 0 0"></div>
  <svg style="left:138px;top:897px" width="7" height="7"><path d="M0.5 0.5 L6.5 6.5 M6.5 0.5 L0.5 6.5" stroke="#5c5c5c" stroke-width="1.1"/></svg>
  <div class="a" style="left:0;top:911px;width:1454px;height:35px;background:#3c3c3c"></div>
  <div class="a" style="left:5px;top:916px;width:122px;height:27px;background:#4ba54b;border-radius:2px"></div>
  <div class="a" style="left:272px;top:917px;width:1px;height:25px;background:#525252"></div>
    <!-- content browser tab icon -->
  <svg style="left:10px;top:893px" width="16" height="15" viewBox="0 0 16 15">
    <path d="M1.5 1 L15.5 0.5 L15 14 L0.5 11.5 Z" fill="#6a86d8"/>
    <g fill="#e8ecf8"><rect x="4" y="2.5" width="2.5" height="2.5"/><rect x="7.5" y="2.5" width="2.5" height="2.5"/><rect x="11" y="2.5" width="2.5" height="2.5"/><rect x="4" y="6" width="2.5" height="2.5"/><rect x="7.5" y="6" width="2.5" height="2.5"/><rect x="11" y="6" width="2.5" height="2.5"/><rect x="4" y="9.5" width="2.5" height="2.5"/><rect x="7.5" y="9.5" width="2.5" height="2.5"/></g>
  </svg>
  <!-- add import doc -->
  <svg style="left:13px;top:922px" width="14" height="16" viewBox="0 0 14 16">
    <path d="M0.5 0.5 L9 0.5 L13.3 5 L13.3 15 L0.5 15 Z" fill="#fff" stroke="#222" stroke-width=".5"/>
    <path d="M9 0.5 L9 5 L13.3 5" fill="#ddd" stroke="#999" stroke-width=".5"/>
  </svg>
  <svg style="left:111px;top:928px" width="8" height="5"><path d="M0 0 L8 0 L4 4 Z" fill="#fff"/></svg>
  <!-- save all icon -->
  <svg style="left:134.5px;top:922.5px" width="15" height="15" viewBox="0 0 15 15">
    <path d="M1 1 L11 1 L14 4 L14 14 L1 14 Z" fill="none" stroke="#fff" stroke-width="1.6"/>
    <rect x="3.5" y="1" width="6.5" height="4" fill="none" stroke="#fff" stroke-width="1.4"/>
    <rect x="3.5" y="8.5" width="8" height="5.5" fill="none" stroke="#fff" stroke-width="1.4"/>
  </svg>
  <!-- nav arrows -->
  <svg style="left:231px;top:924px" width="34" height="14" viewBox="0 0 34 14">
    <path d="M7 1.5 L1.5 7 L7 12.5 M1.5 7 L12.5 7" fill="none" stroke="#8a8a8a" stroke-width="2.6"/>
    <path d="M26.5 1.5 L32 7 L26.5 12.5 M32 7 L21 7" fill="none" stroke="#8a8a8a" stroke-width="2.6"/>
  </svg>
  <!-- folder -->
  <svg style="left:282px;top:922.5px" width="17" height="13" viewBox="0 0 17 13">
    <path d="M0.5 1 L5.5 1 L7 2.5 L13 2.5 L13 5 L4 5 L0.5 12 Z" fill="#fff"/>
    <path d="M4 6 L16.5 6 L13 12.5 L0.8 12.5 Z" fill="#fff"/>
  </svg>
  <svg style="left:375px;top:925.5px" width="6" height="9"><path d="M0 0 L5.5 4.3 L0 8.6 Z" fill="#fff"/></svg>


  <div class="tx" style="left:32.20px;top:9.84px;font-size:12px;font-weight:normal;color:#d6d6d6;transform:scaleX(1.0065);text-shadow:1px 1px 1px rgba(0,0,0,0.85);">Place Actors</div>
<div class="tx" style="left:183.40px;top:9.84px;font-size:12px;font-weight:normal;color:#d6d6d6;transform:scaleX(0.9983);text-shadow:1px 1px 1px rgba(0,0,0,0.85);">Ornatrix</div>
<div class="tx" style="left:152.10px;top:39.64px;font-size:12px;font-weight:normal;color:#cdcdcd;transform:scaleX(1.0096);">Ornatrix v.0.1.0.28346</div>
<div class="tx" style="left:18.40px;top:81.30px;font-size:13px;font-weight:bold;color:#dedede;transform:scaleX(0.8889);text-shadow:1px 1px 1px rgba(0,0,0,0.85);">Global Brush</div>
<div class="tx" style="left:18.40px;top:109.80px;font-size:13px;font-weight:bold;color:#dedede;transform:scaleX(0.9218);text-shadow:1px 1px 1px rgba(0,0,0,0.85);">Strand Filtering</div>
<div class="tx" style="left:18.60px;top:248.00px;font-size:13px;font-weight:bold;color:#dedede;transform:scaleX(0.9367);text-shadow:1px 1px 1px rgba(0,0,0,0.85);">Strand Modification</div>
<div class="tx" style="left:18.60px;top:364.00px;font-size:13px;font-weight:bold;color:#dedede;transform:scaleX(0.9210);text-shadow:1px 1px 1px rgba(0,0,0,0.85);">Mirroring</div>
<div class="tx" style="left:18.20px;top:456.00px;font-size:13px;font-weight:bold;color:#dedede;transform:scaleX(0.9051);text-shadow:1px 1px 1px rgba(0,0,0,0.85);">Elastic Brushing</div>
<div class="tx" style="left:20.30px;top:137.57px;font-size:11.5px;font-weight:normal;color:#d0d0d0;transform:scaleX(0.9891);">Affect Selected Only</div>
<div class="tx" style="left:20.30px;top:161.57px;font-size:11.5px;font-weight:normal;color:#d0d0d0;transform:scaleX(0.9869);">Affect by Roots</div>
<div class="tx" style="left:20.30px;top:185.57px;font-size:11.5px;font-weight:normal;color:#d0d0d0;transform:scaleX(0.9718);">Respect Vertex Weights</div>
<div class="tx" style="left:19.31px;top:209.57px;font-size:11.5px;font-weight:normal;color:#d0d0d0;transform:scaleX(0.9938);">Ignore Backfacing</div>
<div class="tx" style="left:20.30px;top:276.27px;font-size:11.5px;font-weight:normal;color:#d0d0d0;transform:scaleX(0.9722);">Preserve Strand Length</div>
<div class="tx" style="left:20.30px;top:300.27px;font-size:11.5px;font-weight:normal;color:#d0d0d0;transform:scaleX(0.9605);">Resample Strands</div>
<div class="tx" style="left:20.30px;top:324.97px;font-size:11.5px;font-weight:normal;color:#d0d0d0;transform:scaleX(0.9797);">Comb Algorithm</div>
<div class="tx" style="left:20.30px;top:393.47px;font-size:11.5px;font-weight:normal;color:#d0d0d0;transform:scaleX(0.9984);">Mirror Axis</div>
<div class="tx" style="left:20.30px;top:418.47px;font-size:11.5px;font-weight:normal;color:#d0d0d0;transform:scaleX(0.9703);">Mirror in World Space</div>
<div class="tx" style="left:20.30px;top:483.57px;font-size:11.5px;font-weight:normal;color:#d0d0d0;transform:scaleX(0.9826);">Elastic Mode</div>
<div class="tx" style="left:20.30px;top:507.57px;font-size:11.5px;font-weight:normal;color:#d0d0d0;transform:scaleX(0.9722);">Poisson Ratio</div>
<div class="tx" style="left:20.30px;top:531.57px;font-size:11.5px;font-weight:normal;color:#d0d0d0;transform:scaleX(0.9657);">RK4Integration</div>
<div class="tx" style="left:20.30px;top:555.57px;font-size:11.5px;font-weight:normal;color:#d0d0d0;transform:scaleX(1.0045);">Multi Scale</div>
<div class="tx" style="left:20.30px;top:579.57px;font-size:11.5px;font-weight:normal;color:#d0d0d0;transform:scaleX(0.9646);">Moving Center</div>
<div class="tx" style="left:20.30px;top:603.57px;font-size:11.5px;font-weight:normal;color:#d0d0d0;transform:scaleX(0.9484);">Use 2d Brush</div>
<div class="tx" style="left:20.30px;top:627.57px;font-size:11.5px;font-weight:normal;color:#d0d0d0;transform:scaleX(0.9572);">Reverse Sign</div>
<div class="tx" style="left:20.30px;top:651.57px;font-size:11.5px;font-weight:normal;color:#d0d0d0;transform:scaleX(0.9728);">Pinch</div>
<div class="tx" style="left:20.30px;top:675.57px;font-size:11.5px;font-weight:normal;color:#d0d0d0;transform:scaleX(0.9695);">Elastic 3d Depth</div>
<div class="tx" style="left:154.30px;top:324.97px;font-size:11.5px;font-weight:normal;color:#161616;transform:scaleX(0.9352);">Unused</div>
<div class="tx" style="left:154.30px;top:393.47px;font-size:11.5px;font-weight:normal;color:#161616;transform:scaleX(0.9263);">None</div>
<div class="tx" style="left:152.40px;top:508.17px;font-size:11.5px;font-weight:normal;color:#161616;transform:scaleX(0.9685);">0.2</div>
<div class="tx" style="left:152.40px;top:676.27px;font-size:11.5px;font-weight:normal;color:#161616;transform:scaleX(0.9685);">0.0</div>
<div class="tx" style="left:435.50px;top:49.54px;font-size:12px;font-weight:normal;color:#dadada;transform:scaleX(0.9570);text-shadow:1px 1px 1px rgba(0,0,0,0.85);">Save Current</div>
<div class="tx" style="left:517.50px;top:49.54px;font-size:12px;font-weight:normal;color:#dadada;transform:scaleX(1.0003);text-shadow:1px 1px 1px rgba(0,0,0,0.85);">Source Control</div>
<div class="tx" style="left:642.30px;top:49.54px;font-size:12px;font-weight:normal;color:#dadada;transform:scaleX(0.9856);text-shadow:1px 1px 1px rgba(0,0,0,0.85);">Modes</div>
<div class="tx" style="left:722.30px;top:49.54px;font-size:12px;font-weight:normal;color:#dadada;transform:scaleX(1.0001);text-shadow:1px 1px 1px rgba(0,0,0,0.85);">Content</div>
<div class="tx" style="left:778.30px;top:49.54px;font-size:12px;font-weight:normal;color:#dadada;transform:scaleX(1.0002);text-shadow:1px 1px 1px rgba(0,0,0,0.85);">Marketplace</div>
<div class="tx" style="left:875.40px;top:49.54px;font-size:12px;font-weight:normal;color:#dadada;transform:scaleX(1.0079);text-shadow:1px 1px 1px rgba(0,0,0,0.85);">Settings</div>
<div class="tx" style="left:964.60px;top:49.54px;font-size:12px;font-weight:normal;color:#dadada;transform:scaleX(0.9936);text-shadow:1px 1px 1px rgba(0,0,0,0.85);">Ornatrix</div>
<div class="tx" style="left:1040.20px;top:49.54px;font-size:12px;font-weight:normal;color:#dadada;transform:scaleX(1.0251);text-shadow:1px 1px 1px rgba(0,0,0,0.85);">Blueprints</div>
<div class="tx" style="left:1120.30px;top:49.54px;font-size:12px;font-weight:normal;color:#dadada;transform:scaleX(1.0059);text-shadow:1px 1px 1px rgba(0,0,0,0.85);">Cinematics</div>
<div class="tx" style="left:1229.50px;top:49.54px;font-size:12px;font-weight:normal;color:#dadada;transform:scaleX(1.0535);text-shadow:1px 1px 1px rgba(0,0,0,0.85);">Build</div>
<div class="tx" style="left:1326.20px;top:49.54px;font-size:12px;font-weight:normal;color:#dadada;transform:scaleX(1.0324);text-shadow:1px 1px 1px rgba(0,0,0,0.85);">Play</div>
<div class="tx" style="left:1395.40px;top:49.54px;font-size:12px;font-weight:normal;color:#dadada;transform:scaleX(1.0389);text-shadow:1px 1px 1px rgba(0,0,0,0.85);">Launch</div>
<div class="tx" style="left:443.40px;top:76.74px;font-size:12px;font-weight:normal;color:#cfcfcf;transform:scaleX(0.9904);">Brushes</div>
<div class="tx" style="left:520.60px;top:76.74px;font-size:12px;font-weight:normal;color:#cfcfcf;transform:scaleX(1.0459);">Tools</div>
<div class="tx" style="left:1006.60px;top:120.74px;font-size:12px;font-weight:normal;color:#8a8a8a;transform:scaleX(1.0009);text-shadow:1px 1px 1px rgba(0,0,0,0.85);">Settings</div>
<div class="tx" style="left:485.70px;top:156.34px;font-size:12px;font-weight:bold;color:#0e0e0e;transform:scaleX(0.9025);">Perspective</div>
<div class="tx" style="left:584.20px;top:156.34px;font-size:12px;font-weight:bold;color:#0e0e0e;transform:scaleX(0.9206);">Lit</div>
<div class="tx" style="left:616.40px;top:156.34px;font-size:12px;font-weight:bold;color:#0e0e0e;transform:scaleX(0.8939);">Show</div>
<div class="tx" style="left:469.70px;top:193.20px;font-size:13px;font-weight:bold;color:#e00000;transform:scaleX(0.9046);text-shadow:1px 1px 0 rgba(40,0,0,0.55);">LIGHTING NEEDS TO BE REBUILT (1 unbuilt object)</div>
<div class="tx" style="left:520.50px;top:212.70px;font-size:13px;font-weight:normal;color:#9c9ca8;transform:scaleX(0.9939);">'DisableAllScreenMessages' to suppress</div>
<div class="tx" style="left:32.20px;top:893.84px;font-size:12px;font-weight:normal;color:#d2d2d2;transform:scaleX(1.0025);text-shadow:1px 1px 1px rgba(0,0,0,0.85);">Content Browser</div>
<div class="tx" style="left:31.50px;top:922.25px;font-size:14px;font-weight:bold;color:#ffffff;transform:scaleX(0.9974);text-shadow:1px 1px 1px rgba(0,0,0,0.85);">Add/Import</div>
<div class="tx" style="left:153.60px;top:922.15px;font-size:14px;font-weight:bold;color:#ffffff;transform:scaleX(1.0096);text-shadow:1px 1px 1px rgba(0,0,0,0.85);">Save All</div>
<div class="tx" style="left:308.50px;top:922.15px;font-size:14px;font-weight:bold;color:#ffffff;transform:scaleX(0.9678);text-shadow:1px 1px 1px rgba(0,0,0,0.85);">Content</div>
</div>
</body></html>
